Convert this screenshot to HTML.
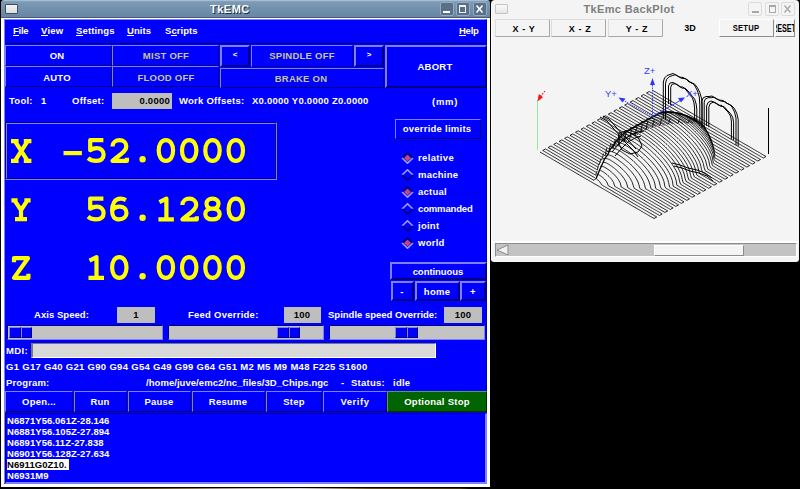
<!DOCTYPE html><html><head><meta charset="utf-8"><style>
html,body{margin:0;padding:0;width:800px;height:489px;overflow:hidden;background:#000;position:relative;}
.a{position:absolute;box-sizing:content-box;}
.t{white-space:pre;}
</style></head><body>
<div class="a" style="left:1px;top:17px;width:489px;height:470px;background:#ffffff;"></div>
<div class="a" style="left:1px;top:0;width:489px;height:17px;background:linear-gradient(#a6bcd2 0px,#a6bcd2 1px,#7d9bb6 1.6px,#6787a6 16px);border-radius:3px 3px 0 0;"></div>
<div class="a" style="left:1px;top:17px;width:489px;height:1px;background:#4c5c6c;"></div>
<div class="a" style="left:5px;top:4px;width:11px;height:8px;border:1px solid #3e4e5c;border-radius:1px;background:linear-gradient(#f4f4f4,#dcdcdc);"></div>
<div class="a t" style="left:211px;top:5px;font:bold 11px/11px 'Liberation Sans',sans-serif;color:#1c2a38;letter-spacing:0.5px;">TkEMC</div>
<div class="a t" style="left:210px;top:4px;font:bold 11px/11px 'Liberation Sans',sans-serif;color:#ffffff;letter-spacing:0.5px;">TkEMC</div>
<div class="a" style="left:440px;top:2px;width:12px;height:12px;border:1px solid #93abc0;border-radius:2px;background:#587189;"></div>
<div class="a" style="left:456px;top:2px;width:12px;height:12px;border:1px solid #93abc0;border-radius:2px;background:#587189;"></div>
<div class="a" style="left:473px;top:2px;width:12px;height:12px;border:1px solid #93abc0;border-radius:2px;background:#587189;"></div>
<div class="a" style="left:443px;top:11px;width:7px;height:2px;background:#ffffff;"></div>
<div class="a" style="left:459px;top:5px;width:5px;height:5px;border:1px solid #f0f0f0;border-top-width:2px;"></div>
<svg class="a" style="left:474px;top:4px" width="12" height="10"><path d="M2.5 1.5 L8.5 8.5 M8.5 1.5 L2.5 8.5" stroke="#fff" stroke-width="1.6"/></svg>
<div class="a" style="left:4px;top:19px;width:481px;height:463px;background:#0000ff;border:1px solid;border-color:#8080ff #0000b0 #0000b0 #8080ff;"></div>
<div class="a" style="left:5px;top:43px;width:481px;height:1px;background:#000080;"></div>
<div class="a t" style="left:13px;top:26px;font:bold 9.5px/9.5px 'Liberation Sans',sans-serif;color:#fff;letter-spacing:-0.25px;">File</div>
<div class="a" style="left:13px;top:35px;width:6px;height:1px;background:#ffffff;"></div>
<div class="a t" style="left:41px;top:26px;font:bold 9.5px/9.5px 'Liberation Sans',sans-serif;color:#fff;letter-spacing:0.25px;">View</div>
<div class="a" style="left:41px;top:35px;width:7px;height:1px;background:#ffffff;"></div>
<div class="a t" style="left:76px;top:26px;font:bold 9.5px/9.5px 'Liberation Sans',sans-serif;color:#fff;letter-spacing:0.15px;">Settings</div>
<div class="a" style="left:76px;top:35px;width:7px;height:1px;background:#ffffff;"></div>
<div class="a t" style="left:127px;top:26px;font:bold 9.5px/9.5px 'Liberation Sans',sans-serif;color:#fff;letter-spacing:0.04999999999999999px;">Units</div>
<div class="a" style="left:127px;top:35px;width:7px;height:1px;background:#ffffff;"></div>
<div class="a t" style="left:165px;top:26px;font:bold 9.5px/9.5px 'Liberation Sans',sans-serif;color:#fff;letter-spacing:0.04999999999999999px;">Scripts</div>
<div class="a" style="left:171px;top:35px;width:6px;height:1px;background:#ffffff;"></div>
<div class="a t" style="left:459px;top:26px;font:bold 9.5px/9.5px 'Liberation Sans',sans-serif;color:#fff;letter-spacing:-0.25px;">Help</div>
<div class="a" style="left:459px;top:35px;width:7px;height:1px;background:#ffffff;"></div>
<div class="a" style="left:5px;top:45px;width:105px;height:19px;border:1px solid;border-color:#8080ff #000080 #000080 #8080ff;"></div>
<div class="a t" style="left:-93px;width:300px;text-align:center;top:51px;font:bold 9.5px/9.5px 'Liberation Sans',sans-serif;color:#fff;letter-spacing:0.25px;">ON</div>
<div class="a" style="left:112px;top:45px;width:105px;height:19px;border:1px solid;border-color:#8080ff #000080 #000080 #8080ff;"></div>
<div class="a t" style="left:16px;width:300px;text-align:center;top:51px;font:bold 9.5px/9.5px 'Liberation Sans',sans-serif;color:#c8c890;letter-spacing:0.25px;">MIST OFF</div>
<div class="a" style="left:220px;top:45px;width:26px;height:18px;border:2px solid;border-color:#8080ff #000080 #000080 #8080ff;"></div>
<div class="a t" style="left:85px;width:300px;text-align:center;top:51px;font:bold 8px/8px 'Liberation Sans',sans-serif;color:#fff;letter-spacing:0px;">&lt;</div>
<div class="a" style="left:251px;top:45px;width:100px;height:20px;border:1px solid;border-color:#8080ff #000080 #000080 #8080ff;"></div>
<div class="a t" style="left:152px;width:300px;text-align:center;top:51px;font:bold 9.5px/9.5px 'Liberation Sans',sans-serif;color:#c8c890;letter-spacing:0.25px;">SPINDLE OFF</div>
<div class="a" style="left:354px;top:45px;width:26px;height:18px;border:2px solid;border-color:#8080ff #000080 #000080 #8080ff;"></div>
<div class="a t" style="left:219px;width:300px;text-align:center;top:51px;font:bold 8px/8px 'Liberation Sans',sans-serif;color:#fff;letter-spacing:0px;">&gt;</div>
<div class="a" style="left:385px;top:45px;width:98px;height:39px;border:2px solid;border-color:#8080ff #000080 #000080 #8080ff;"></div>
<div class="a t" style="left:285px;width:300px;text-align:center;top:62px;font:bold 9.5px/9.5px 'Liberation Sans',sans-serif;color:#fff;letter-spacing:0.25px;">ABORT</div>
<div class="a" style="left:5px;top:66px;width:105px;height:19px;border:1px solid;border-color:#8080ff #000080 #000080 #8080ff;"></div>
<div class="a t" style="left:-93px;width:300px;text-align:center;top:73px;font:bold 9.5px/9.5px 'Liberation Sans',sans-serif;color:#fff;letter-spacing:0.25px;">AUTO</div>
<div class="a" style="left:112px;top:66px;width:105px;height:19px;border:1px solid;border-color:#8080ff #000080 #000080 #8080ff;"></div>
<div class="a t" style="left:16px;width:300px;text-align:center;top:73px;font:bold 9.5px/9.5px 'Liberation Sans',sans-serif;color:#c8c890;letter-spacing:0.25px;">FLOOD OFF</div>
<div class="a" style="left:220px;top:68px;width:162px;height:18px;border:1px solid;border-color:#8080ff #000080 #000080 #8080ff;"></div>
<div class="a t" style="left:151px;width:300px;text-align:center;top:74px;font:bold 9.5px/9.5px 'Liberation Sans',sans-serif;color:#c8c890;letter-spacing:0.25px;">BRAKE ON</div>
<div class="a t" style="left:9px;top:96px;font:bold 9.5px/9.5px 'Liberation Sans',sans-serif;color:#fff;letter-spacing:0.25px;">Tool:</div>
<div class="a t" style="left:41px;top:96px;font:bold 9.5px/9.5px 'Liberation Sans',sans-serif;color:#fff;letter-spacing:0.25px;">1</div>
<div class="a t" style="left:72px;top:96px;font:bold 9.5px/9.5px 'Liberation Sans',sans-serif;color:#fff;letter-spacing:0.25px;">Offset:</div>
<div class="a" style="left:112px;top:93px;width:60px;height:16px;background:#bebebe;"></div>
<div class="a t" style="left:-130px;width:300px;text-align:right;top:96px;font:bold 9.5px/9.5px 'Liberation Sans',sans-serif;color:#000;letter-spacing:0.25px;">0.0000</div>
<div class="a t" style="left:179px;top:96px;font:bold 9.5px/9.5px 'Liberation Sans',sans-serif;color:#fff;letter-spacing:0.25px;">Work Offsets:</div>
<div class="a t" style="left:252px;top:96px;font:bold 9.5px/9.5px 'Liberation Sans',sans-serif;color:#fff;letter-spacing:0.25px;">X0.0000 Y0.0000 Z0.0000</div>
<div class="a t" style="left:432px;top:97px;font:bold 9.5px/9.5px 'Liberation Sans',sans-serif;color:#fff;letter-spacing:0.75px;">(mm)</div>
<div class="a" style="left:395px;top:119px;width:84px;height:18px;border:1px solid;border-color:#8080ff #000080 #000080 #8080ff;"></div>
<div class="a t" style="left:287px;width:300px;text-align:center;top:124px;font:bold 9.5px/9.5px 'Liberation Sans',sans-serif;color:#fff;letter-spacing:0.25px;">override limits</div>
<div class="a" style="left:5px;top:122px;width:270px;height:56px;border:1px solid;border-color:#000080 #8080ff #8080ff #000080;"></div>
<div class="a" style="left:6px;top:123px;width:268px;height:54px;border:1px solid;border-color:#8080ff #000080 #000080 #8080ff;"></div>
<svg class="a" style="left:0;top:0" width="290" height="300"><g fill="none" stroke="#ffff00" stroke-width="4.2" stroke-linejoin="round"><path transform="translate(21.20,162.80)" d="M-6.2,-21.7 L6.4,-1.9 M6.4,-21.7 L-6.2,-1.9 M-10.2,-21.7 L-2.6,-21.7 M2.6,-21.7 L10.2,-21.7 M-10.2,-1.9 L-2.6,-1.9 M2.6,-1.9 L10.2,-1.9"/><path transform="translate(72.70,162.80)" d="M-9.2,-9.7 L9.2,-9.7"/><path transform="translate(96.00,162.80)" d="M7.4,-22.6 L-5.8,-22.6 L-5.8,-12.6 C-3.6,-14 -1.5,-14.6 0.8,-14.6 C5,-14.6 7.6,-11.8 7.6,-8.2 C7.6,-4 4.6,-1.9 0,-1.9 C-3,-1.9 -5.6,-2.6 -8,-4.6"/><path transform="translate(119.30,162.80)" d="M-6.8,-16.2 C-6.8,-20.5 -3.5,-22.6 0.2,-22.6 C4.4,-22.6 7,-20 7,-16.4 C7,-11.5 1,-8.5 -6.8,-1.9 L7.6,-1.9 L7.6,-5"/><circle fill="#ffff00" stroke="none" cx="142.60" cy="159.20" r="3.2"/><path transform="translate(165.90,162.80)" d="M0,-22.6 C4.6,-22.6 7.2,-18 7.2,-12.2 C7.2,-6.4 4.6,-1.9 0,-1.9 C-4.6,-1.9 -7.2,-6.4 -7.2,-12.2 C-7.2,-18 -4.6,-22.6 0,-22.6 Z"/><path transform="translate(189.20,162.80)" d="M0,-22.6 C4.6,-22.6 7.2,-18 7.2,-12.2 C7.2,-6.4 4.6,-1.9 0,-1.9 C-4.6,-1.9 -7.2,-6.4 -7.2,-12.2 C-7.2,-18 -4.6,-22.6 0,-22.6 Z"/><path transform="translate(212.50,162.80)" d="M0,-22.6 C4.6,-22.6 7.2,-18 7.2,-12.2 C7.2,-6.4 4.6,-1.9 0,-1.9 C-4.6,-1.9 -7.2,-6.4 -7.2,-12.2 C-7.2,-18 -4.6,-22.6 0,-22.6 Z"/><path transform="translate(235.80,162.80)" d="M0,-22.6 C4.6,-22.6 7.2,-18 7.2,-12.2 C7.2,-6.4 4.6,-1.9 0,-1.9 C-4.6,-1.9 -7.2,-6.4 -7.2,-12.2 C-7.2,-18 -4.6,-22.6 0,-22.6 Z"/><path transform="translate(21.00,221.00)" d="M-6.4,-20.6 L0,-10.8 L6.4,-20.6 M0,-10.8 L0,-1.9 M-9.6,-20.6 L-3.4,-20.6 M3.4,-20.6 L9.6,-20.6 M-6,-1.9 L6,-1.9"/><path transform="translate(96.00,221.30)" d="M7.4,-22.6 L-5.8,-22.6 L-5.8,-12.6 C-3.6,-14 -1.5,-14.6 0.8,-14.6 C5,-14.6 7.6,-11.8 7.6,-8.2 C7.6,-4 4.6,-1.9 0,-1.9 C-3,-1.9 -5.6,-2.6 -8,-4.6"/><path transform="translate(119.30,221.30)" d="M6.6,-21.2 C4.8,-22.2 3,-22.6 1.2,-22.6 C-4.8,-22.6 -7.2,-17.2 -7.2,-10.5 C-7.2,-4.6 -4.6,-1.9 -0.2,-1.9 C4.4,-1.9 7.2,-4.8 7.2,-8.4 C7.2,-12.2 4.4,-14.6 0.2,-14.6 C-3.6,-14.6 -6,-12.8 -7,-10.8"/><circle fill="#ffff00" stroke="none" cx="142.60" cy="217.70" r="3.2"/><path transform="translate(165.90,221.30)" d="M-6.5,-19.2 L0.5,-22.6 L0.5,-1.9 M-7.5,-1.9 L8,-1.9"/><path transform="translate(189.20,221.30)" d="M-6.8,-16.2 C-6.8,-20.5 -3.5,-22.6 0.2,-22.6 C4.4,-22.6 7,-20 7,-16.4 C7,-11.5 1,-8.5 -6.8,-1.9 L7.6,-1.9 L7.6,-5"/><path transform="translate(212.50,221.30)" d="M0,-22.6 C3.8,-22.6 6,-20.4 6,-17.6 C6,-14.8 3.8,-12.6 0,-12.6 C-3.8,-12.6 -6,-14.8 -6,-17.6 C-6,-20.4 -3.8,-22.6 0,-22.6 Z M0,-12.6 C4.6,-12.6 7.2,-10.4 7.2,-7.2 C7.2,-4 4.6,-1.9 0,-1.9 C-4.6,-1.9 -7.2,-4 -7.2,-7.2 C-7.2,-10.4 -4.6,-12.6 0,-12.6 Z"/><path transform="translate(235.80,221.30)" d="M0,-22.6 C4.6,-22.6 7.2,-18 7.2,-12.2 C7.2,-6.4 4.6,-1.9 0,-1.9 C-4.6,-1.9 -7.2,-6.4 -7.2,-12.2 C-7.2,-18 -4.6,-22.6 0,-22.6 Z"/><path transform="translate(21.00,279.80)" d="M-7,-17.6 L-7,-21.6 L7,-21.6 L-7,-1.9 L7.4,-1.9 L7.4,-6"/><path transform="translate(96.00,279.80)" d="M-6.5,-19.2 L0.5,-22.6 L0.5,-1.9 M-7.5,-1.9 L8,-1.9"/><path transform="translate(119.30,279.80)" d="M0,-22.6 C4.6,-22.6 7.2,-18 7.2,-12.2 C7.2,-6.4 4.6,-1.9 0,-1.9 C-4.6,-1.9 -7.2,-6.4 -7.2,-12.2 C-7.2,-18 -4.6,-22.6 0,-22.6 Z"/><circle fill="#ffff00" stroke="none" cx="142.60" cy="276.20" r="3.2"/><path transform="translate(165.90,279.80)" d="M0,-22.6 C4.6,-22.6 7.2,-18 7.2,-12.2 C7.2,-6.4 4.6,-1.9 0,-1.9 C-4.6,-1.9 -7.2,-6.4 -7.2,-12.2 C-7.2,-18 -4.6,-22.6 0,-22.6 Z"/><path transform="translate(189.20,279.80)" d="M0,-22.6 C4.6,-22.6 7.2,-18 7.2,-12.2 C7.2,-6.4 4.6,-1.9 0,-1.9 C-4.6,-1.9 -7.2,-6.4 -7.2,-12.2 C-7.2,-18 -4.6,-22.6 0,-22.6 Z"/><path transform="translate(212.50,279.80)" d="M0,-22.6 C4.6,-22.6 7.2,-18 7.2,-12.2 C7.2,-6.4 4.6,-1.9 0,-1.9 C-4.6,-1.9 -7.2,-6.4 -7.2,-12.2 C-7.2,-18 -4.6,-22.6 0,-22.6 Z"/><path transform="translate(235.80,279.80)" d="M0,-22.6 C4.6,-22.6 7.2,-18 7.2,-12.2 C7.2,-6.4 4.6,-1.9 0,-1.9 C-4.6,-1.9 -7.2,-6.4 -7.2,-12.2 C-7.2,-18 -4.6,-22.6 0,-22.6 Z"/></g></svg>
<svg class="a" style="left:401px;top:152px" width="13" height="12"><path d="M1 6 L6.5 0.8 L12 6" fill="none" stroke="#00007a" stroke-width="1.6"/><path d="M1 6 L6.5 11.2 L12 6" fill="none" stroke="#9a9aff" stroke-width="1.6"/><path d="M3 6 L6.5 2.8 L10 6 L6.5 9.2Z" fill="#c84870"/></svg>
<div class="a t" style="left:418px;top:153px;font:bold 9.5px/9.5px 'Liberation Sans',sans-serif;color:#fff;letter-spacing:0.35px;">relative</div>
<svg class="a" style="left:401px;top:169px" width="13" height="12"><path d="M1 6 L6.5 0.8 L12 6" fill="none" stroke="#9a9aff" stroke-width="1.6"/><path d="M1 6 L6.5 11.2 L12 6" fill="none" stroke="#00007a" stroke-width="1.6"/></svg>
<div class="a t" style="left:418px;top:170px;font:bold 9.5px/9.5px 'Liberation Sans',sans-serif;color:#fff;letter-spacing:0.25px;">machine</div>
<svg class="a" style="left:401px;top:186px" width="13" height="12"><path d="M1 6 L6.5 0.8 L12 6" fill="none" stroke="#00007a" stroke-width="1.6"/><path d="M1 6 L6.5 11.2 L12 6" fill="none" stroke="#9a9aff" stroke-width="1.6"/><path d="M3 6 L6.5 2.8 L10 6 L6.5 9.2Z" fill="#c84870"/></svg>
<div class="a t" style="left:418px;top:187px;font:bold 9.5px/9.5px 'Liberation Sans',sans-serif;color:#fff;letter-spacing:0.25px;">actual</div>
<svg class="a" style="left:401px;top:203px" width="13" height="12"><path d="M1 6 L6.5 0.8 L12 6" fill="none" stroke="#9a9aff" stroke-width="1.6"/><path d="M1 6 L6.5 11.2 L12 6" fill="none" stroke="#00007a" stroke-width="1.6"/></svg>
<div class="a t" style="left:418px;top:204px;font:bold 9.5px/9.5px 'Liberation Sans',sans-serif;color:#fff;letter-spacing:-0.15000000000000002px;">commanded</div>
<svg class="a" style="left:401px;top:220px" width="13" height="12"><path d="M1 6 L6.5 0.8 L12 6" fill="none" stroke="#9a9aff" stroke-width="1.6"/><path d="M1 6 L6.5 11.2 L12 6" fill="none" stroke="#00007a" stroke-width="1.6"/></svg>
<div class="a t" style="left:418px;top:221px;font:bold 9.5px/9.5px 'Liberation Sans',sans-serif;color:#fff;letter-spacing:0.25px;">joint</div>
<svg class="a" style="left:401px;top:237px" width="13" height="12"><path d="M1 6 L6.5 0.8 L12 6" fill="none" stroke="#00007a" stroke-width="1.6"/><path d="M1 6 L6.5 11.2 L12 6" fill="none" stroke="#9a9aff" stroke-width="1.6"/><path d="M3 6 L6.5 2.8 L10 6 L6.5 9.2Z" fill="#c84870"/></svg>
<div class="a t" style="left:418px;top:238px;font:bold 9.5px/9.5px 'Liberation Sans',sans-serif;color:#fff;letter-spacing:0.25px;">world</div>
<div class="a" style="left:390px;top:262px;width:93px;height:14px;border:2px solid;border-color:#8080ff #000080 #000080 #8080ff;"></div>
<div class="a t" style="left:288px;width:300px;text-align:center;top:267px;font:bold 9.5px/9.5px 'Liberation Sans',sans-serif;color:#fff;letter-spacing:-0.04999999999999999px;">continuous</div>
<div class="a" style="left:391px;top:281px;width:19px;height:16px;border:2px solid;border-color:#8080ff #000080 #000080 #8080ff;"></div>
<div class="a t" style="left:252px;width:300px;text-align:center;top:287px;font:bold 9.5px/9.5px 'Liberation Sans',sans-serif;color:#fff;letter-spacing:0.25px;">-</div>
<div class="a" style="left:415px;top:281px;width:41px;height:16px;border:2px solid;border-color:#8080ff #000080 #000080 #8080ff;"></div>
<div class="a t" style="left:287px;width:300px;text-align:center;top:287px;font:bold 9.5px/9.5px 'Liberation Sans',sans-serif;color:#fff;letter-spacing:0.25px;">home</div>
<div class="a" style="left:460px;top:281px;width:22px;height:16px;border:2px solid;border-color:#8080ff #000080 #000080 #8080ff;"></div>
<div class="a t" style="left:323px;width:300px;text-align:center;top:287px;font:bold 9.5px/9.5px 'Liberation Sans',sans-serif;color:#fff;letter-spacing:0.25px;">+</div>
<div class="a t" style="left:34px;top:310px;font:bold 9.5px/9.5px 'Liberation Sans',sans-serif;color:#fff;letter-spacing:0.04999999999999999px;">Axis Speed:</div>
<div class="a" style="left:117px;top:307px;width:38px;height:16px;background:#bebebe;"></div>
<div class="a t" style="left:-14px;width:300px;text-align:center;top:310px;font:bold 9.5px/9.5px 'Liberation Sans',sans-serif;color:#000;letter-spacing:0.25px;">1</div>
<div class="a t" style="left:188px;top:310px;font:bold 9.5px/9.5px 'Liberation Sans',sans-serif;color:#fff;letter-spacing:0.25px;">Feed Override:</div>
<div class="a" style="left:284px;top:307px;width:37px;height:16px;background:#bebebe;"></div>
<div class="a t" style="left:152px;width:300px;text-align:center;top:310px;font:bold 9.5px/9.5px 'Liberation Sans',sans-serif;color:#000;letter-spacing:0.25px;">100</div>
<div class="a t" style="left:328px;top:310px;font:bold 9.5px/9.5px 'Liberation Sans',sans-serif;color:#fff;letter-spacing:0.0px;">Spindle speed Override:</div>
<div class="a" style="left:444px;top:307px;width:38px;height:16px;background:#bebebe;"></div>
<div class="a t" style="left:313px;width:300px;text-align:center;top:310px;font:bold 9.5px/9.5px 'Liberation Sans',sans-serif;color:#000;letter-spacing:0.25px;">100</div>
<div class="a" style="left:7px;top:325px;width:154px;height:13px;border:1px solid;border-color:#000080 #8080ff #8080ff #000080;background:#c3c3c3;"></div>
<div class="a" style="left:9px;top:327px;width:10px;height:9px;border:1px solid;border-color:#8080ff #000080 #000080 #8080ff;background:#0000ff;"></div>
<div class="a" style="left:21px;top:327px;width:9px;height:9px;border:1px solid;border-color:#8080ff #000080 #000080 #8080ff;background:#0000ff;"></div>
<div class="a" style="left:168px;top:325px;width:154px;height:13px;border:1px solid;border-color:#000080 #8080ff #8080ff #000080;background:#c3c3c3;"></div>
<div class="a" style="left:277px;top:327px;width:10px;height:9px;border:1px solid;border-color:#8080ff #000080 #000080 #8080ff;background:#0000ff;"></div>
<div class="a" style="left:289px;top:327px;width:9px;height:9px;border:1px solid;border-color:#8080ff #000080 #000080 #8080ff;background:#0000ff;"></div>
<div class="a" style="left:329px;top:325px;width:154px;height:13px;border:1px solid;border-color:#000080 #8080ff #8080ff #000080;background:#c3c3c3;"></div>
<div class="a" style="left:395px;top:327px;width:10px;height:9px;border:1px solid;border-color:#8080ff #000080 #000080 #8080ff;background:#0000ff;"></div>
<div class="a" style="left:407px;top:327px;width:9px;height:9px;border:1px solid;border-color:#8080ff #000080 #000080 #8080ff;background:#0000ff;"></div>
<div class="a t" style="left:6px;top:346px;font:bold 9.5px/9.5px 'Liberation Sans',sans-serif;color:#fff;letter-spacing:0.4px;">MDI:</div>
<div class="a" style="left:31px;top:343px;width:402px;height:13px;border:1px solid;border-color:#7a7a6a #ffffff #ffffff #7a7a6a;border-width:1px 1px 1px 2px;background:#d9d9d9;"></div>
<div class="a t" style="left:6px;top:362px;font:bold 9.5px/9.5px 'Liberation Sans',sans-serif;color:#fff;letter-spacing:0.3px;">G1 G17 G40 G21 G90 G94 G54 G49 G99 G64 G51 M2 M5 M9 M48 F225 S1600</div>
<div class="a t" style="left:6px;top:378px;font:bold 9.5px/9.5px 'Liberation Sans',sans-serif;color:#fff;letter-spacing:0.15px;">Program:</div>
<div class="a t" style="left:146px;top:378px;font:bold 9.5px/9.5px 'Liberation Sans',sans-serif;color:#fff;letter-spacing:0.04999999999999999px;">/home/juve/emc2/nc_files/3D_Chips.ngc</div>
<div class="a t" style="left:341px;top:378px;font:bold 9.5px/9.5px 'Liberation Sans',sans-serif;color:#fff;letter-spacing:0.25px;">-</div>
<div class="a t" style="left:351px;top:378px;font:bold 9.5px/9.5px 'Liberation Sans',sans-serif;color:#fff;letter-spacing:0.25px;">Status:</div>
<div class="a t" style="left:393px;top:378px;font:bold 9.5px/9.5px 'Liberation Sans',sans-serif;color:#fff;letter-spacing:0.25px;">idle</div>
<div class="a" style="left:5px;top:391px;width:66px;height:19px;border:1px solid;border-color:#8080ff #000080 #000080 #8080ff;"></div>
<div class="a t" style="left:-111px;width:300px;text-align:center;top:397px;font:bold 9.5px/9.5px 'Liberation Sans',sans-serif;color:#fff;letter-spacing:0.25px;">Open...</div>
<div class="a" style="left:74px;top:391px;width:51px;height:19px;border:1px solid;border-color:#8080ff #000080 #000080 #8080ff;"></div>
<div class="a t" style="left:-50px;width:300px;text-align:center;top:397px;font:bold 9.5px/9.5px 'Liberation Sans',sans-serif;color:#fff;letter-spacing:0.25px;">Run</div>
<div class="a" style="left:128px;top:391px;width:61px;height:19px;border:1px solid;border-color:#8080ff #000080 #000080 #8080ff;"></div>
<div class="a t" style="left:9px;width:300px;text-align:center;top:397px;font:bold 9.5px/9.5px 'Liberation Sans',sans-serif;color:#fff;letter-spacing:0.25px;">Pause</div>
<div class="a" style="left:192px;top:391px;width:71px;height:19px;border:1px solid;border-color:#8080ff #000080 #000080 #8080ff;"></div>
<div class="a t" style="left:78px;width:300px;text-align:center;top:397px;font:bold 9.5px/9.5px 'Liberation Sans',sans-serif;color:#fff;letter-spacing:0.25px;">Resume</div>
<div class="a" style="left:266px;top:391px;width:54px;height:19px;border:1px solid;border-color:#8080ff #000080 #000080 #8080ff;"></div>
<div class="a t" style="left:144px;width:300px;text-align:center;top:397px;font:bold 9.5px/9.5px 'Liberation Sans',sans-serif;color:#fff;letter-spacing:0.25px;">Step</div>
<div class="a" style="left:323px;top:391px;width:62px;height:19px;border:1px solid;border-color:#8080ff #000080 #000080 #8080ff;"></div>
<div class="a t" style="left:205px;width:300px;text-align:center;top:397px;font:bold 9.5px/9.5px 'Liberation Sans',sans-serif;color:#fff;letter-spacing:0.55px;">Verify</div>
<div class="a" style="left:387px;top:391px;width:98px;height:19px;border:1px solid;border-color:#5a9a5a #003000 #003000 #5a9a5a;background:#006400;"></div>
<div class="a t" style="left:287px;width:300px;text-align:center;top:397px;font:bold 9.5px/9.5px 'Liberation Sans',sans-serif;color:#fff;letter-spacing:0.25px;">Optional Stop</div>
<div class="a" style="left:5px;top:413px;width:479px;height:68px;border:1px solid;border-color:#000080 #8080ff #8080ff #000080;border-width:1px 2px 2px 1px;"></div>
<div class="a t" style="left:7px;top:416px;font:bold 9.5px/9.5px 'Liberation Sans',sans-serif;color:#fff;letter-spacing:0.04999999999999999px;">N6871Y56.061Z-28.146</div>
<div class="a t" style="left:7px;top:427px;font:bold 9.5px/9.5px 'Liberation Sans',sans-serif;color:#fff;letter-spacing:0.04999999999999999px;">N6881Y56.105Z-27.894</div>
<div class="a t" style="left:7px;top:438px;font:bold 9.5px/9.5px 'Liberation Sans',sans-serif;color:#fff;letter-spacing:0.04999999999999999px;">N6891Y56.11Z-27.838</div>
<div class="a t" style="left:7px;top:449px;font:bold 9.5px/9.5px 'Liberation Sans',sans-serif;color:#fff;letter-spacing:0.04999999999999999px;">N6901Y56.128Z-27.634</div>
<div class="a" style="left:7px;top:459px;width:62px;height:11px;background:#ffffff;"></div>
<div class="a t" style="left:7px;top:460px;font:bold 9.5px/9.5px 'Liberation Sans',sans-serif;color:#000;letter-spacing:0.04999999999999999px;">N6911G0Z10.</div>
<div class="a t" style="left:7px;top:471px;font:bold 9.5px/9.5px 'Liberation Sans',sans-serif;color:#fff;letter-spacing:0.04999999999999999px;">N6931M9</div>
<div class="a" style="left:40px;top:488px;width:430px;height:1px;background:linear-gradient(90deg,#000 0,#3a2414 40px,#6a4a30 120px,#b0a8a0 200px,#d0d0d0 260px,#6a4628 330px,#40281a 420px,#000 430px);"></div>
<div class="a" style="left:491px;top:0;width:308px;height:262px;background:#f4f4f4;border-radius:4px 4px 3px 3px;"></div>
<div class="a" style="left:491px;top:12px;width:1px;height:248px;background:#ffffff;"></div>
<div class="a" style="left:495px;top:4px;width:11px;height:8px;border:1px solid #c4c4c4;border-radius:1px;background:linear-gradient(#fafafa,#e6e6e6);"></div>
<div class="a t" style="left:479px;width:300px;text-align:center;top:4px;font:bold 11px/11px 'Liberation Sans',sans-serif;color:#7f7f7f;letter-spacing:0.35px;">TkEmc BackPlot</div>
<div class="a" style="left:748px;top:2px;width:12px;height:12px;border:1px solid #dcdcdc;border-radius:2px;"></div>
<div class="a" style="left:765px;top:2px;width:12px;height:12px;border:1px solid #dcdcdc;border-radius:2px;"></div>
<div class="a" style="left:781px;top:2px;width:12px;height:12px;border:1px solid #dcdcdc;border-radius:2px;"></div>
<div class="a" style="left:752px;top:11px;width:7px;height:2px;background:#a8a8a8;"></div>
<div class="a" style="left:769px;top:5px;width:5px;height:5px;border:1px solid #a8a8a8;border-top-width:2px;"></div>
<svg class="a" style="left:782px;top:4px" width="12" height="10"><path d="M2.5 1.5 L8.5 8.5 M8.5 1.5 L2.5 8.5" stroke="#a8a8a8" stroke-width="1.4"/></svg>
<div class="a" style="left:495px;top:19px;width:53px;height:16px;border:1px solid;border-color:#dcdcdc #a8a8a8 #a8a8a8 #dcdcdc;background:#f4f4f4;"></div>
<div class="a t" style="left:374px;width:300px;text-align:center;top:25px;font:bold 9px/9px 'Liberation Sans',sans-serif;color:#000;letter-spacing:0.6px;">X - Y</div>
<div class="a" style="left:551px;top:19px;width:53px;height:16px;border:1px solid;border-color:#dcdcdc #a8a8a8 #a8a8a8 #dcdcdc;background:#f4f4f4;"></div>
<div class="a t" style="left:430px;width:300px;text-align:center;top:25px;font:bold 9px/9px 'Liberation Sans',sans-serif;color:#000;letter-spacing:0.6px;">X - Z</div>
<div class="a" style="left:608px;top:19px;width:53px;height:16px;border:1px solid;border-color:#dcdcdc #a8a8a8 #a8a8a8 #dcdcdc;background:#f4f4f4;"></div>
<div class="a t" style="left:487px;width:300px;text-align:center;top:25px;font:bold 9px/9px 'Liberation Sans',sans-serif;color:#000;letter-spacing:0.6px;">Y - Z</div>
<div class="a t" style="left:540px;width:300px;text-align:center;top:24px;font:bold 9px/9px 'Liberation Sans',sans-serif;color:#000;letter-spacing:0px;">3D</div>
<div class="a" style="left:719px;top:19px;width:53px;height:16px;border:1px solid;border-color:#ffffff #8c8c8c #8c8c8c #ffffff;background:#f4f4f4;"></div>
<div class="a t" style="left:596px;width:300px;text-align:center;top:23px;font:bold 9.5px/9.5px 'Liberation Sans',sans-serif;color:#000;letter-spacing:0.25px;transform:scaleX(0.8);">SETUP</div>
<div class="a" style="left:775px;top:19px;width:18px;height:16px;border:1px solid;border-color:#ffffff #8c8c8c #8c8c8c #ffffff;background:#f4f4f4;overflow:hidden;"><div class="t" style="position:absolute;left:-4px;top:4px;transform:scaleX(0.72);transform-origin:0 0;font:bold 10px/10px 'Liberation Sans',sans-serif;color:#000">RESET</div></div>
<div class="a" style="left:492px;top:241px;width:306px;height:2px;background:#ffffff;"></div>
<div class="a" style="left:495px;top:243px;width:300px;height:12px;border:1px solid;border-color:#8c8c8c #ffffff #ffffff #8c8c8c;background:#c3c3c3;"></div>
<svg class="a" style="left:496px;top:244px" width="14" height="12"><path d="M1 6 L12 1 L12 11Z" fill="#f0f0f0" stroke="#8c8c8c" stroke-width="1"/></svg>
<div class="a" style="left:654px;top:245px;width:88px;height:9px;border:1px solid;border-color:#ffffff #8c8c8c #8c8c8c #ffffff;background:#f4f4f4;"></div>
<svg class="a" style="left:491px;top:38px" width="308" height="203" viewBox="0 0 308 203">
<path d="M49.0,114.0 L50.0,114.6 L50.9,115.1 L51.9,115.7 L52.8,116.2 L53.8,116.8 L54.7,117.3 L55.6,117.9 L56.6,118.4 L57.5,119.0 L58.5,119.5 L59.5,120.1 L60.4,120.7 L61.4,121.2 L62.3,121.8 L63.2,122.3 L64.2,122.9 L65.1,123.4 L66.1,124.0 L67.0,124.5 L68.0,125.1 L69.0,125.6 L69.9,126.2 L70.9,126.7 L71.8,127.3 L72.8,127.9 L73.7,128.4 L74.6,129.0 L75.6,129.5 L76.5,130.1 L77.5,130.6 L78.5,131.2 L79.4,131.7 L80.4,132.3 L81.3,132.8 L82.2,133.4 L83.2,133.9 L84.1,134.5 L85.1,135.1 L86.0,135.6 L87.0,136.2 L88.0,136.7 L88.9,137.3 L89.9,137.8 L90.8,138.4 L91.8,138.9 L92.7,139.5 L93.6,140.0 L94.6,140.6 L95.5,141.2 L96.5,141.7 L97.5,142.3 L98.4,142.8 L99.4,143.4 L100.3,143.9 L101.2,144.5 L102.2,145.0 L103.1,145.6 L104.1,146.1 L105.0,146.7 L106.0,147.2 L107.0,147.8 L107.9,148.4 L108.9,148.9 L109.8,149.5 L110.8,150.0 L111.7,150.6 L112.6,151.1 L113.6,151.7 L114.5,152.2 L115.5,152.8 L116.5,153.3 L117.4,153.9 L118.4,154.5 L119.3,155.0 L120.2,155.6 L121.2,156.1 L122.1,156.7 L123.1,157.2 L124.0,157.8 L125.0,158.3 L126.0,158.9 L126.9,159.4 L127.9,160.0 L128.8,160.6 L129.8,161.1 L130.7,161.7 L131.6,162.2 L132.6,162.8 L133.5,163.3 L134.5,163.9 L135.5,164.4 L136.4,165.0 L137.4,165.5 L138.3,166.1 L139.2,166.6 L140.2,167.2 L141.1,167.8 L142.1,168.3 L143.0,168.9 L144.0,169.4 L145.0,170.0 L145.9,170.5 L146.9,171.1 L147.8,171.6 L148.8,172.2 L149.7,172.7 L150.6,173.3 L151.6,173.8 L152.5,174.4 L153.5,175.0 L154.5,175.5 L155.4,176.1 L156.4,176.6 L157.3,177.2 L158.2,177.7 L159.2,178.3 L160.1,178.8 L161.1,179.4 L162.0,179.9 L163.0,180.5 L165.7,179.0 L164.8,178.4 L163.8,177.9 L162.9,177.3 L161.9,176.8 L161.0,176.2 L160.0,175.7 L159.1,175.1 L158.1,174.6 L157.2,174.0 L156.2,173.4 L155.3,172.9 L154.3,172.3 L153.4,171.8 L152.4,171.2 L151.5,170.7 L150.5,170.1 L149.6,169.6 L148.6,169.0 L147.7,168.5 L146.7,167.9 L145.8,167.4 L144.8,166.8 L143.9,166.2 L142.9,165.7 L142.0,165.1 L141.0,164.6 L140.1,164.0 L139.1,163.5 L138.2,162.9 L137.2,162.4 L136.3,161.8 L135.3,161.3 L134.4,160.7 L133.4,160.1 L132.5,159.6 L131.5,159.0 L130.6,158.5 L129.6,157.9 L128.7,157.4 L127.7,156.8 L126.8,156.3 L125.8,155.7 L124.9,155.2 L123.9,154.6 L123.0,154.1 L122.0,153.5 L121.1,152.9 L120.1,152.4 L119.2,151.8 L118.2,151.3 L117.3,150.7 L116.3,150.2 L115.4,149.6 L114.4,149.1 L113.5,148.5 L112.5,148.0 L111.6,147.4 L110.6,146.8 L109.7,145.2 L108.7,143.8 L107.8,142.8 L106.8,142.0 L105.9,141.4M104.9,141.0 L104.0,141.2 L103.0,142.4 L102.1,141.9 L101.1,141.3 L100.2,140.8 L99.2,140.2 L98.3,139.6 L97.3,139.1 L96.4,138.5 L95.4,138.0 L94.5,137.4 L93.5,136.9 L92.6,136.3 L91.6,135.8 L90.7,135.2 L89.7,134.7 L88.8,134.1 L87.8,133.5 L86.9,133.0 L85.9,132.4 L85.0,131.9 L84.0,131.3 L83.1,130.8 L82.1,130.2 L81.2,129.7 L80.2,129.1 L79.3,128.6 L78.3,128.0 L77.4,127.5 L76.4,126.9 L75.5,126.3 L74.5,125.8 L73.6,125.2 L72.6,124.7 L71.7,124.1 L70.7,123.6 L69.8,123.0 L68.8,122.5 L67.9,121.9 L66.9,121.4 L66.0,120.8 L65.0,120.2 L64.1,119.7 L63.1,119.1 L62.2,118.6 L61.2,118.0 L60.3,117.5 L59.3,116.9 L58.4,116.4 L57.4,115.8 L56.5,115.3 L55.5,114.7 L54.6,114.2 L53.6,113.6 L52.7,113.0 L51.7,112.5 L54.5,111.0 L55.4,111.5 L56.4,112.1 L57.3,112.6 L58.3,113.2 L59.2,113.7 L60.2,114.3 L61.1,114.9 L62.1,115.4 L63.0,116.0 L64.0,116.5 L64.9,117.1 L65.9,117.6 L66.8,118.2 L67.8,118.7 L68.7,119.3 L69.7,119.8 L70.6,120.4 L71.6,121.0 L72.5,121.5 L73.5,122.1 L74.4,122.6 L75.4,123.2 L76.3,123.7 L77.3,124.3 L78.2,124.8 L79.2,125.4 L80.1,125.9 L81.1,126.5 L82.0,127.0 L83.0,127.6 L83.9,128.2 L84.9,128.7 L85.8,129.3 L86.8,129.8 L87.7,130.4 L88.7,130.9 L89.6,131.5 L90.6,132.0 L91.5,132.6 L92.5,133.1 L93.4,133.7 L94.4,134.3 L95.3,134.8 L96.3,135.4 L97.2,135.9 L98.2,136.5 L99.1,137.0 L100.1,137.6 L101.0,138.1 L102.0,138.7 L102.9,139.2 L103.9,139.8M105.8,136.7 L106.7,136.6 L107.7,136.8 L108.6,137.3 L109.6,137.9 L110.5,138.6 L111.5,139.3 L112.4,140.1 L113.4,141.0 L114.3,142.1 L115.3,143.3 L116.2,144.9 L117.2,147.6 L118.1,148.1 L119.1,148.7 L120.0,149.2 L121.0,149.8 L121.9,150.3 L122.9,150.9 L123.8,151.4 L124.8,152.0 L125.7,152.5 L126.7,153.1 L127.6,153.6 L128.6,154.2 L129.5,154.8 L130.5,155.3 L131.4,155.9 L132.4,156.4 L133.3,157.0 L134.3,157.5 L135.2,158.1 L136.2,158.6 L137.1,159.2 L138.1,159.7 L139.0,160.3 L140.0,160.9 L140.9,161.4 L141.9,162.0 L142.8,162.5 L143.8,163.1 L144.7,163.6 L145.7,164.2 L146.6,164.7 L147.6,165.3 L148.5,165.8 L149.5,166.4 L150.4,166.9 L151.4,167.5 L152.3,168.1 L153.3,168.6 L154.2,169.2 L155.2,169.7 L156.1,170.3 L157.1,170.8 L158.0,171.4 L159.0,171.9 L159.9,172.5 L160.9,173.0 L161.8,173.6 L162.8,174.2 L163.7,174.7 L164.7,175.3 L165.6,175.8 L166.6,176.4 L167.5,176.9 L168.5,177.5 L171.2,176.0 L170.2,175.4 L169.3,174.9 L168.3,174.3 L167.4,173.7 L166.4,173.2 L165.5,172.6 L164.5,172.1 L163.6,171.5 L162.6,171.0 L161.7,170.4 L160.7,169.9 L159.8,169.3 L158.8,168.8 L157.9,168.2 L156.9,167.7 L156.0,167.1 L155.0,166.5 L154.1,166.0 L153.1,165.4 L152.2,164.9 L151.2,164.3 L150.3,163.8 L149.3,163.2 L148.4,162.7 L147.4,162.1 L146.5,161.6 L145.5,161.0 L144.6,160.4 L143.6,159.9 L142.7,159.3 L141.7,158.8 L140.8,158.2 L139.8,157.7 L138.9,157.1 L137.9,156.6 L137.0,156.0 L136.0,155.5 L135.1,154.9 L134.1,154.4 L133.2,153.8 L132.2,153.2 L131.3,152.7 L130.3,152.1 L129.4,151.6 L128.4,151.0 L127.5,150.5 L126.5,149.9 L125.6,149.4 L124.6,148.8 L123.7,148.3 L122.7,144.8 L121.8,143.1 L120.8,141.7 L119.9,140.5 L118.9,139.4 L118.0,138.5 L117.0,137.6 L116.1,136.7 L115.1,136.0 L114.2,135.2 L113.2,134.6 L112.3,133.9 L111.3,133.3 L110.4,132.8 L109.4,132.5M106.6,132.8 L105.6,133.8 L104.7,137.2 L103.7,136.6 L102.8,136.1 L101.8,135.5 L100.9,135.0 L99.9,134.4 L99.0,133.8 L98.0,133.3 L97.1,132.7 L96.1,132.2 L95.2,131.6 L94.2,131.1 L93.3,130.5 L92.3,130.0 L91.4,129.4 L90.4,128.9 L89.5,128.3 L88.5,127.8 L87.6,127.2 L86.6,126.6 L85.7,126.1 L84.7,125.5 L83.8,125.0 L82.8,124.4 L81.9,123.9 L80.9,123.3 L80.0,122.8 L79.0,122.2 L78.1,121.7 L77.1,121.1 L76.2,120.5 L75.2,120.0 L74.3,119.4 L73.3,118.9 L72.4,118.3 L71.4,117.8 L70.5,117.2 L69.5,116.7 L68.6,116.1 L67.6,115.6 L66.7,115.0 L65.7,114.5 L64.8,113.9 L63.8,113.3 L62.9,112.8 L61.9,112.2 L61.0,111.7 L60.0,111.1 L59.1,110.6 L58.1,110.0 L57.2,109.5 L59.9,108.0 L60.9,108.5 L61.8,109.1 L62.8,109.6 L63.7,110.2 L64.7,110.7 L65.6,111.3 L66.6,111.8 L67.5,112.4 L68.5,112.9 L69.4,113.5 L70.4,114.0 L71.3,114.6 L72.3,115.2 L73.2,115.7 L74.2,116.3 L75.1,116.8 L76.1,117.4 L77.0,117.9 L78.0,118.5 L78.9,119.0 L79.9,119.6 L80.8,120.1 L81.8,120.7 L82.7,121.3 L83.7,121.8 L84.6,122.4 L85.6,122.9 L86.5,123.5 L87.5,124.0 L88.4,124.6 L89.4,125.1 L90.3,125.7 L91.3,126.2 L92.2,126.8 L93.2,127.3 L94.1,127.9 L95.1,128.5 L96.0,129.0 L97.0,129.6 L97.9,130.1 L98.9,130.7 L99.8,131.2 L100.8,131.8 L101.7,132.3 L102.7,132.9 L103.6,133.4 L104.6,134.0 L105.5,134.6M109.3,128.3 L110.3,128.2 L111.2,128.3 L112.2,128.6 L113.1,129.0 L114.1,129.5 L115.0,130.1 L116.0,130.7 L116.9,131.3 L117.9,132.0 L118.8,132.7 L119.8,133.5 L120.7,134.3 L121.7,135.1 L122.6,136.0 L123.6,137.0 L124.5,138.0 L125.5,139.1 L126.4,140.3 L127.4,141.6 L128.3,143.2 L129.3,145.1 L130.2,149.0 L131.2,149.5 L132.1,150.1 L133.1,150.6 L134.0,151.2 L135.0,151.7 L135.9,152.3 L136.9,152.8 L137.8,153.4 L138.8,153.9 L139.7,154.5 L140.7,155.1 L141.6,155.6 L142.6,156.2 L143.5,156.7 L144.5,157.3 L145.4,157.8 L146.4,158.4 L147.3,158.9 L148.3,159.5 L149.2,160.0 L150.2,160.6 L151.1,161.2 L152.1,161.7 L153.0,162.3 L154.0,162.8 L154.9,163.4 L155.9,163.9 L156.8,164.5 L157.8,165.0 L158.7,165.6 L159.7,166.1 L160.6,166.7 L161.6,167.2 L162.5,167.8 L163.5,168.4 L164.4,168.9 L165.4,169.5 L166.3,170.0 L167.3,170.6 L168.2,171.1 L169.2,171.7 L170.1,172.2 L171.1,172.8 L172.0,173.3 L173.0,173.9 L173.9,174.5 L176.7,172.9 L175.7,172.4 L174.8,171.8 L173.8,171.3 L172.9,170.7 L171.9,170.2 L171.0,169.6 L170.0,169.1 L169.1,168.5 L168.1,168.0 L167.2,167.4 L166.2,166.8 L165.3,166.3 L164.3,165.7 L163.4,165.2 L162.4,164.6 L161.5,164.1 L160.5,163.5 L159.6,163.0 L158.6,162.4 L157.7,161.9 L156.7,161.3 L155.8,160.7 L154.8,160.2 L153.9,159.6 L152.9,159.1 L152.0,158.5 L151.0,158.0 L150.1,157.4 L149.1,156.9 L148.2,156.3 L147.2,155.8 L146.3,155.2 L145.3,154.7 L144.4,154.1 L143.4,153.5 L142.5,153.0 L141.5,152.4 L140.6,151.9 L139.6,151.3 L138.7,150.8 L137.7,150.2 L136.8,149.7 L135.8,145.9 L134.9,143.6 L133.9,141.9 L133.0,140.4 L132.0,139.1 L131.1,137.9 L130.1,136.7 L129.2,135.7 L128.2,134.7 L127.3,133.7 L126.3,132.9 L125.4,132.0 L124.4,131.2 L123.5,130.4 L122.5,129.6 L121.6,128.9 L120.6,128.2 L119.7,127.6 L118.7,126.9 L117.8,126.3 L116.8,125.8 L115.9,125.2 L114.9,124.8 L114.0,124.5 L113.0,124.3 L112.1,124.3M108.3,126.1 L107.3,127.7 L106.4,131.9 L105.4,131.4 L104.5,130.8 L103.5,130.3 L102.6,129.7 L101.6,129.2 L100.7,128.6 L99.7,128.1 L98.8,127.5 L97.8,126.9 L96.9,126.4 L95.9,125.8 L95.0,125.3 L94.0,124.7 L93.1,124.2 L92.1,123.6 L91.2,123.1 L90.2,122.5 L89.3,122.0 L88.3,121.4 L87.4,120.8 L86.4,120.3 L85.5,119.7 L84.5,119.2 L83.6,118.6 L82.6,118.1 L81.7,117.5 L80.7,117.0 L79.8,116.4 L78.8,115.9 L77.9,115.3 L76.9,114.8 L76.0,114.2 L75.0,113.6 L74.1,113.1 L73.1,112.5 L72.2,112.0 L71.2,111.4 L70.3,110.9 L69.3,110.3 L68.4,109.8 L67.4,109.2 L66.5,108.7 L65.5,108.1 L64.6,107.5 L63.6,107.0 L62.7,106.4 L65.4,104.9 L66.3,105.5 L67.3,106.0 L68.2,106.6 L69.2,107.1 L70.1,107.7 L71.1,108.3 L72.0,108.8 L73.0,109.4 L73.9,109.9 L74.9,110.5 L75.8,111.0 L76.8,111.6 L77.7,112.1 L78.7,112.7 L79.6,113.2 L80.6,113.8 L81.5,114.3 L82.5,114.9 L83.4,115.5 L84.4,116.0 L85.3,116.6 L86.3,117.1 L87.2,117.7 L88.2,118.2 L89.1,118.8 L90.1,119.3 L91.0,119.9 L92.0,120.4 L92.9,121.0 L93.9,121.6 L94.8,122.1 L95.8,122.7 L96.7,123.2 L97.7,123.8 L98.6,124.3 L99.6,124.9 L100.5,125.4 L101.5,126.0 L102.4,126.5 L103.4,127.1 L104.3,127.6 L105.3,128.2 L106.2,128.8 L107.2,129.3M111.9,120.9 L112.9,120.6 L113.8,120.5 L114.8,120.5 L115.7,120.6 L116.7,120.9 L117.6,121.2 L118.6,121.7 L119.5,122.2 L120.5,122.8 L121.4,123.4 L122.4,124.0 L123.3,124.6 L124.3,125.3 L125.2,126.0 L126.2,126.7 L127.1,127.4 L128.1,128.2 L129.0,129.0 L130.0,129.9 L130.9,130.7 L131.9,131.6 L132.8,132.6 L133.8,133.6 L134.7,134.6 L135.7,135.7 L136.6,136.9 L137.6,138.1 L138.5,139.5 L139.5,140.9 L140.4,142.6 L141.4,144.7 L142.3,147.8 L143.3,150.4 L144.2,150.9 L145.2,151.5 L146.1,152.0 L147.1,152.6 L148.0,153.1 L149.0,153.7 L149.9,154.2 L150.9,154.8 L151.8,155.4 L152.8,155.9 L153.7,156.5 L154.7,157.0 L155.6,157.6 L156.6,158.1 L157.5,158.7 L158.5,159.2 L159.4,159.8 L160.4,160.3 L161.3,160.9 L162.3,161.5 L163.2,162.0 L164.2,162.6 L165.1,163.1 L166.1,163.7 L167.0,164.2 L168.0,164.8 L168.9,165.3 L169.9,165.9 L170.8,166.4 L171.8,167.0 L172.7,167.5 L173.7,168.1 L174.6,168.7 L175.6,169.2 L176.5,169.8 L177.5,170.3 L178.4,170.9 L179.4,171.4 L182.1,169.9 L181.2,169.4 L180.2,168.8 L179.3,168.3 L178.3,167.7 L177.4,167.1 L176.4,166.6 L175.5,166.0 L174.5,165.5 L173.6,164.9 L172.6,164.4 L171.7,163.8 L170.7,163.3 L169.8,162.7 L168.8,162.2 L167.9,161.6 L166.9,161.0 L166.0,160.5 L165.0,159.9 L164.1,159.4 L163.1,158.8 L162.2,158.3 L161.2,157.7 L160.3,157.2 L159.3,156.6 L158.4,156.1 L157.4,155.5 L156.5,155.0 L155.5,154.4 L154.6,153.8 L153.6,153.3 L152.7,152.7 L151.7,152.2 L150.8,151.6 L149.8,151.1 L148.9,150.5 L147.9,146.7 L147.0,144.0 L146.0,142.0 L145.1,140.3 L144.1,138.7 L143.2,137.4 L142.2,136.1 L141.3,134.9 L140.3,133.7 L139.4,132.7 L138.4,131.6 L137.5,130.6 L136.5,129.7 L135.6,128.8 L134.6,127.9 L133.7,127.0 L132.7,126.2 L131.8,125.4 L130.8,124.6 L129.9,123.9 L128.9,123.2 L128.0,122.5 L127.0,121.8 L126.1,121.1 L125.1,120.5 L124.2,119.9 L123.2,119.3 L122.3,118.7 L121.3,118.2 L120.4,117.8 L119.4,117.4 L118.5,117.1 L117.5,116.9 L116.6,116.8 L115.6,116.8M109.9,120.9 L109.0,124.0 L108.0,126.7 L107.1,126.1 L106.1,125.6 L105.2,125.0 L104.2,124.5 L103.3,123.9 L102.3,123.4 L101.4,122.8 L100.4,122.3 L99.5,121.7 L98.5,121.1 L97.6,120.6 L96.6,120.0 L95.7,119.5 L94.7,118.9 L93.8,118.4 L92.8,117.8 L91.9,117.3 L90.9,116.7 L90.0,116.2 L89.0,115.6 L88.1,115.1 L87.1,114.5 L86.2,113.9 L85.2,113.4 L84.3,112.8 L83.3,112.3 L82.4,111.7 L81.4,111.2 L80.5,110.6 L79.5,110.1 L78.6,109.5 L77.6,109.0 L76.7,108.4 L75.7,107.8 L74.8,107.3 L73.8,106.7 L72.9,106.2 L71.9,105.6 L71.0,105.1 L70.0,104.5 L69.1,104.0 L68.1,103.4 L70.9,101.9 L71.8,102.5 L72.8,103.0 L73.7,103.6 L74.7,104.1 L75.6,104.7 L76.6,105.2 L77.5,105.8 L78.5,106.3 L79.4,106.9 L80.4,107.4 L81.3,108.0 L82.3,108.6 L83.2,109.1 L84.2,109.7 L85.1,110.2 L86.1,110.8 L87.0,111.3 L88.0,111.9 L88.9,112.4 L89.9,113.0 L90.8,113.5 L91.8,114.1 L92.7,114.6 L93.7,115.2 L94.6,115.8 L95.6,116.3 L96.5,116.9 L97.5,117.4 L98.4,118.0 L99.4,118.5 L100.3,119.1 L101.3,119.6 L102.2,120.2 L103.2,120.7 L104.1,121.3 L105.1,121.9 L106.0,122.4 L107.0,123.0 L107.9,123.5 L108.9,124.1 L109.8,124.6M115.5,113.8 L116.5,113.5 L117.4,113.4 L118.4,113.3 L119.3,113.4 L120.3,113.5 L121.2,113.8 L122.2,114.1 L123.1,114.4 L124.1,114.9 L125.0,115.4 L126.0,116.0 L126.9,116.6 L127.9,117.2 L128.8,117.8 L129.8,118.5 L130.7,119.1 L131.7,119.8 L132.6,120.5 L133.6,121.2 L134.5,122.0 L135.5,122.8 L136.4,123.6 L137.4,124.4 L138.3,125.2 L139.3,126.1 L140.2,127.0 L141.2,127.9 L142.1,128.9 L143.1,129.9 L144.0,130.9 L145.0,132.0 L145.9,133.1 L146.9,134.3 L147.8,135.5 L148.8,136.9 L149.7,138.3 L150.7,139.9 L151.6,141.7 L152.6,143.7 L153.5,146.5 L154.5,150.7 L155.4,151.2 L156.4,151.8 L157.3,152.3 L158.3,152.9 L159.2,153.4 L160.2,154.0 L161.1,154.5 L162.1,155.1 L163.0,155.7 L164.0,156.2 L164.9,156.8 L165.9,157.3 L166.8,157.9 L167.8,158.4 L168.7,159.0 L169.7,159.5 L170.6,160.1 L171.6,160.6 L172.5,161.2 L173.5,161.8 L174.4,162.3 L175.4,162.9 L176.3,163.4 L177.3,164.0 L178.2,164.5 L179.2,165.1 L180.1,165.6 L181.1,166.2 L182.0,166.7 L183.0,167.3 L183.9,167.8 L184.9,168.4 L187.6,166.9 L186.6,166.3 L185.7,165.8 L184.7,165.2 L183.8,164.7 L182.8,164.1 L181.9,163.6 L180.9,163.0 L180.0,162.5 L179.0,161.9 L178.1,161.3 L177.1,160.8 L176.2,160.2 L175.2,159.7 L174.3,159.1 L173.3,158.6 L172.4,158.0 L171.4,157.5 L170.5,156.9 L169.5,156.4 L168.6,155.8 L167.6,155.3 L166.7,154.7 L165.7,154.1 L164.8,153.6 L163.8,153.0 L162.9,152.5 L161.9,151.9 L161.0,151.4 L160.0,150.8 L159.1,147.2 L158.1,144.0 L157.2,141.8 L156.2,139.9 L155.3,138.2 L154.3,136.7 L153.4,135.3 L152.4,134.0 L151.5,132.7 L150.5,131.5 L149.6,130.4 L148.6,129.3 L147.7,128.3 L146.7,127.3 L145.8,126.3 L144.8,125.4 L143.9,124.5 L142.9,123.6 L142.0,122.7 L141.0,121.9 L140.1,121.1 L139.1,120.3 L138.2,119.5 L137.2,118.8 L136.3,118.0 L135.3,117.3 L134.4,116.6 L133.4,116.0 L132.5,115.3 L131.5,114.7 L130.6,114.0 L129.6,113.4 L128.7,112.9 L127.7,112.3 L126.8,111.8 L125.8,111.3 L124.9,110.9 L123.9,110.6 L123.0,110.3 L122.0,110.1 L121.1,110.0 L120.1,110.0M112.5,115.6 L111.6,119.2 L110.6,122.0 L109.7,121.4 L108.7,120.9 L107.8,120.3 L106.8,119.8 L105.9,119.2 L104.9,118.7 L104.0,118.1 L103.0,117.6 L102.1,117.0 L101.1,116.5 L100.2,115.9 L99.2,115.4 L98.3,114.8 L97.3,114.2 L96.4,113.7 L95.4,113.1 L94.5,112.6 L93.5,112.0 L92.6,111.5 L91.6,110.9 L90.7,110.4 L89.7,109.8 L88.8,109.3 L87.8,108.7 L86.9,108.1 L85.9,107.6 L85.0,107.0 L84.0,106.5 L83.1,105.9 L82.1,105.4 L81.2,104.8 L80.2,104.3 L79.3,103.7 L78.3,103.2 L77.4,102.6 L76.4,102.1 L75.5,101.5 L74.5,100.9 L73.6,100.4 L76.3,98.9 L77.3,99.4 L78.2,100.0 L79.2,100.5 L80.1,101.1 L81.1,101.6 L82.0,102.2 L83.0,102.8 L83.9,103.3 L84.9,103.9 L85.8,104.4 L86.8,105.0 L87.7,105.5 L88.7,106.1 L89.6,106.6 L90.6,107.2 L91.5,107.7 L92.5,108.3 L93.4,108.9 L94.4,109.4 L95.3,110.0 L96.3,110.5 L97.2,111.1 L98.2,111.6 L99.1,112.2 L100.1,112.7 L101.0,113.3 L102.0,113.8 L102.9,114.4 L103.9,114.9 L104.8,115.5 L105.8,116.1 L106.7,116.6 L107.7,117.2 L108.6,117.7 L109.6,118.3 L110.5,118.8 L111.5,119.4 L112.4,119.9M120.0,107.2 L121.0,107.0 L121.9,106.9 L122.9,106.8 L123.8,106.9 L124.8,107.0 L125.7,107.3 L126.7,107.5 L127.6,107.9 L128.6,108.3 L129.5,108.8 L130.5,109.3 L131.4,109.9 L132.4,110.5 L133.3,111.1 L134.3,111.7 L135.2,112.3 L136.2,112.9 L137.1,113.6 L138.1,114.3 L139.0,115.0 L140.0,115.7 L140.9,116.4 L141.9,117.2 L142.8,118.0 L143.8,118.7 L144.7,119.6 L145.7,120.4 L146.6,121.2 L147.6,122.1 L148.5,123.0 L149.5,124.0 L150.4,124.9 L151.4,125.9 L152.3,126.9 L153.3,128.0 L154.2,129.1 L155.2,130.2 L156.1,131.4 L157.1,132.7 L158.0,134.0 L159.0,135.4 L159.9,136.9 L160.9,138.5 L161.8,140.3 L162.8,142.4 L163.7,145.1 L164.7,150.4 L165.6,151.0 L166.6,151.5 L167.5,152.1 L168.5,152.6 L169.4,153.2 L170.4,153.7 L171.3,154.3 L172.3,154.8 L173.2,155.4 L174.2,156.0 L175.1,156.5 L176.1,157.1 L177.0,157.6 L178.0,158.2 L178.9,158.7 L179.9,159.3 L180.8,159.8 L181.8,160.4 L182.7,160.9 L183.7,161.5 L184.6,162.1 L185.6,162.6 L186.5,163.2 L187.5,163.7 L188.4,164.3 L189.4,164.8 L190.3,165.4 L193.0,163.9 L192.1,163.3 L191.1,162.8 L190.2,162.2 L189.2,161.6 L188.3,161.1 L187.3,160.5 L186.4,160.0 L185.4,159.4 L184.5,158.9 L183.5,158.3 L182.6,157.8 L181.6,157.2 L180.7,156.7 L179.7,156.1 L178.8,155.6 L177.8,155.0 L176.9,154.4 L175.9,153.9 L175.0,153.3 L174.0,152.8 L173.1,152.2 L172.1,151.7 L171.2,151.1 L170.2,150.6 L169.3,148.2 L168.3,143.9 L167.4,141.4 L166.4,139.3 L165.5,137.5 L164.5,135.9 L163.6,134.4 L162.6,133.0 L161.7,131.6 L160.7,130.4 L159.8,129.2 L158.8,128.0 L157.9,126.9 L156.9,125.8 L156.0,124.8 L155.0,123.8 L154.1,122.8 L153.1,121.8 L152.2,120.9 L151.2,120.0 L150.3,119.1 L149.3,118.3 L148.4,117.4 L147.4,116.6 L146.5,115.8 L145.5,115.1 L144.6,114.3 L143.6,113.6 L142.7,112.8 L141.7,112.1 L140.8,111.4 L139.8,110.8 L138.9,110.1 L137.9,109.5 L137.0,108.8 L136.0,108.2 L135.1,107.6 L134.1,107.1 L133.2,106.5 L132.2,106.0 L131.3,105.5 L130.3,105.1 L129.4,104.7 L128.4,104.4 L127.5,104.2 L126.5,104.0 L125.6,103.9 L124.6,103.9 L123.7,104.0M116.1,109.8 L115.1,112.6 L114.2,117.9 L113.2,117.3 L112.3,116.8 L111.3,116.2 L110.4,115.7 L109.4,115.1 L108.5,114.5 L107.5,114.0 L106.6,113.4 L105.6,112.9 L104.7,112.3 L103.7,111.8 L102.8,111.2 L101.8,110.7 L100.9,110.1 L99.9,109.6 L99.0,109.0 L98.0,108.4 L97.1,107.9 L96.1,107.3 L95.2,106.8 L94.2,106.2 L93.3,105.7 L92.3,105.1 L91.4,104.6 L90.4,104.0 L89.5,103.5 L88.5,102.9 L87.6,102.4 L86.6,101.8 L85.7,101.2 L84.7,100.7 L83.8,100.1 L82.8,99.6 L81.9,99.0 L80.9,98.5 L80.0,97.9 L79.0,97.4 L81.8,95.9 L82.7,96.4 L83.7,97.0 L84.6,97.5 L85.6,98.1 L86.5,98.6 L87.5,99.2 L88.4,99.7 L89.4,100.3 L90.3,100.8 L91.3,101.4 L92.2,101.9 L93.2,102.5 L94.1,103.1 L95.1,103.6 L96.0,104.2 L97.0,104.7 L97.9,105.3 L98.9,105.8 L99.8,106.4 L100.8,106.9 L101.7,107.5 L102.7,108.0 L103.6,108.6 L104.6,109.2 L105.5,109.7 L106.5,110.3 L107.4,110.8 L108.4,111.4 L109.3,111.9 L110.3,112.5 L111.2,113.0 L112.2,113.6 L113.1,114.1 L114.1,114.7 L115.0,115.2 L116.0,115.8M124.5,101.5 L125.5,101.3 L126.4,101.2 L127.4,101.1 L128.3,101.2 L129.3,101.3 L130.2,101.5 L131.2,101.7 L132.1,102.0 L133.1,102.4 L134.0,102.8 L135.0,103.3 L135.9,103.9 L136.9,104.4 L137.8,105.0 L138.8,105.6 L139.7,106.2 L140.7,106.8 L141.6,107.5 L142.6,108.1 L143.5,108.8 L144.5,109.5 L145.4,110.2 L146.4,110.9 L147.3,111.6 L148.3,112.3 L149.2,113.1 L150.2,113.9 L151.1,114.7 L152.1,115.5 L153.0,116.3 L154.0,117.2 L154.9,118.1 L155.9,119.0 L156.8,119.9 L157.8,120.8 L158.7,121.8 L159.7,122.8 L160.6,123.9 L161.6,124.9 L162.5,126.0 L163.5,127.2 L164.4,128.4 L165.4,129.6 L166.3,130.9 L167.3,132.3 L168.2,133.7 L169.2,135.3 L170.1,136.9 L171.1,138.8 L172.0,140.9 L173.0,143.6 L173.9,148.6 L174.9,150.2 L175.8,150.7 L176.8,151.3 L177.7,151.8 L178.7,152.4 L179.6,152.9 L180.6,153.5 L181.5,154.0 L182.5,154.6 L183.4,155.1 L184.4,155.7 L185.3,156.3 L186.3,156.8 L187.2,157.4 L188.2,157.9 L189.1,158.5 L190.1,159.0 L191.0,159.6 L192.0,160.1 L192.9,160.7 L193.9,161.2 L194.8,161.8 L195.8,162.4 L198.5,160.8 L197.6,160.3 L196.6,159.7 L195.7,159.2 L194.7,158.6 L193.8,158.1 L192.8,157.5 L191.9,157.0 L190.9,156.4 L190.0,155.9 L189.0,155.3 L188.1,154.7 L187.1,154.2 L186.2,153.6 L185.2,153.1 L184.3,152.5 L183.3,152.0 L182.4,151.4 L181.4,150.9 L180.5,150.3 L179.5,149.8 L178.6,149.2 L177.6,144.3 L176.7,141.2 L175.7,138.8 L174.8,136.8 L173.8,135.1 L172.9,133.4 L171.9,131.9 L171.0,130.5 L170.0,129.2 L169.1,127.9 L168.1,126.7 L167.2,125.5 L166.2,124.3 L165.3,123.2 L164.3,122.2 L163.4,121.1 L162.4,120.1 L161.5,119.2 L160.5,118.2 L159.6,117.3 L158.6,116.4 L157.7,115.5 L156.7,114.6 L155.8,113.8 L154.8,113.0 L153.9,112.2 L152.9,111.4 L152.0,110.6 L151.0,109.9 L150.1,109.1 L149.1,108.4 L148.2,107.7 L147.2,107.0 L146.3,106.3 L145.3,105.7 L144.4,105.0 L143.4,104.4 L142.5,103.8 L141.5,103.2 L140.6,102.6 L139.6,102.0 L138.7,101.4 L137.7,100.9 L136.8,100.4 L135.8,100.0 L134.9,99.6 L133.9,99.3 L133.0,99.0 L132.0,98.8 L131.1,98.7 L130.1,98.6 L129.2,98.6 L128.2,98.7M119.7,105.9 L118.7,109.4 L117.8,113.7 L116.8,113.2 L115.9,112.6 L114.9,112.1 L114.0,111.5 L113.0,111.0 L112.1,110.4 L111.1,109.9 L110.2,109.3 L109.2,108.7 L108.3,108.2 L107.3,107.6 L106.4,107.1 L105.4,106.5 L104.5,106.0 L103.5,105.4 L102.6,104.9 L101.6,104.3 L100.7,103.8 L99.7,103.2 L98.8,102.7 L97.8,102.1 L96.9,101.5 L95.9,101.0 L95.0,100.4 L94.0,99.9 L93.1,99.3 L92.1,98.8 L91.2,98.2 L90.2,97.7 L89.3,97.1 L88.3,96.6 L87.4,96.0 L86.4,95.4 L85.5,94.9 L84.5,94.3 L87.2,92.8 L88.2,93.4 L89.1,93.9 L90.1,94.5 L91.0,95.0 L92.0,95.6 L92.9,96.2 L93.9,96.7 L94.8,97.3 L95.8,97.8 L96.7,98.4 L97.7,98.9 L98.6,99.5 L99.6,100.0 L100.5,100.6 L101.5,101.1 L102.4,101.7 L103.4,102.3 L104.3,102.8 L105.3,103.4 L106.2,103.9 L107.2,104.5 L108.1,105.0 L109.1,105.6 L110.0,106.1 L111.0,106.7 L111.9,107.2 L112.9,107.8 L113.8,108.3 L114.8,108.9 L115.7,109.5 L116.7,110.0 L117.6,110.6 L118.6,111.1 L119.5,111.7M129.0,96.7 L130.0,96.5 L130.9,96.3 L131.9,96.3 L132.8,96.3 L133.8,96.4 L134.7,96.5 L135.7,96.7 L136.6,97.0 L137.6,97.3 L138.5,97.7 L139.5,98.2 L140.4,98.6 L141.4,99.2 L142.3,99.7 L143.3,100.3 L144.2,100.9 L145.2,101.5 L146.1,102.1 L147.1,102.8 L148.0,103.4 L149.0,104.1 L149.9,104.7 L150.9,105.4 L151.8,106.1 L152.8,106.9 L153.7,107.6 L154.7,108.3 L155.6,109.1 L156.6,109.9 L157.5,110.7 L158.5,111.5 L159.4,112.3 L160.4,113.2 L161.3,114.0 L162.3,114.9 L163.2,115.8 L164.2,116.8 L165.1,117.7 L166.1,118.7 L167.0,119.7 L168.0,120.8 L168.9,121.8 L169.9,122.9 L170.8,124.1 L171.8,125.3 L172.7,126.5 L173.7,127.8 L174.6,129.1 L175.6,130.5 L176.5,132.0 L177.5,133.7 L178.4,135.4 L179.4,137.4 L180.3,139.6 L181.3,142.5 L182.2,148.2 L183.2,148.8 L184.1,149.4 L185.1,149.9 L186.0,150.5 L187.0,151.0 L187.9,151.6 L188.9,152.1 L189.8,152.7 L190.8,153.2 L191.7,153.8 L192.7,154.3 L193.6,154.9 L194.6,155.5 L195.5,156.0 L196.5,156.6 L197.4,157.1 L198.4,157.7 L199.3,158.2 L200.3,158.8 L201.2,159.3 L204.0,157.8 L203.0,157.3 L202.1,156.7 L201.1,156.2 L200.2,155.6 L199.2,155.0 L198.3,154.5 L197.3,153.9 L196.4,153.4 L195.4,152.8 L194.5,152.3 L193.5,151.7 L192.6,151.2 L191.6,150.6 L190.7,150.1 L189.7,149.5 L188.8,149.0 L187.8,148.4 L186.9,147.8 L185.9,147.3 L185.0,142.0 L184.0,138.9 L183.1,136.6 L182.1,134.5 L181.2,132.8 L180.2,131.1 L179.3,129.6 L178.3,128.1 L177.4,126.8 L176.4,125.5 L175.5,124.2 L174.5,123.0 L173.6,121.9 L172.6,120.7 L171.7,119.7 L170.7,118.6 L169.8,117.6 L168.8,116.6 L167.9,115.6 L166.9,114.7 L166.0,113.7 L165.0,112.8 L164.1,112.0 L163.1,111.1 L162.2,110.3 L161.2,109.4 L160.3,108.6 L159.3,107.8 L158.4,107.1 L157.4,106.3 L156.5,105.6 L155.5,104.8 L154.6,104.1 L153.6,103.4 L152.7,102.7 L151.7,102.1 L150.8,101.4 L149.8,100.8 L148.9,100.1 L147.9,99.5 L147.0,98.9 L146.0,98.3 L145.1,97.7 L144.1,97.2 L143.2,96.6 L142.2,96.1 L141.3,95.7 L140.3,95.3 L139.4,95.0 L138.4,94.7 L137.5,94.5 L136.5,94.3 L135.6,94.2 L134.6,94.2 L133.7,94.2 L132.7,94.4M124.2,101.9 L123.2,105.4 L122.3,110.2 L121.3,109.6 L120.4,109.1 L119.4,108.5 L118.5,107.9 L117.5,107.4 L116.6,106.8 L115.6,106.3 L114.7,105.7 L113.7,105.2 L112.8,104.6 L111.8,104.1 L110.9,103.5 L109.9,103.0 L109.0,102.4 L108.0,101.8 L107.1,101.3 L106.1,100.7 L105.2,100.2 L104.2,99.6 L103.3,99.1 L102.3,98.5 L101.4,98.0 L100.4,97.4 L99.5,96.9 L98.5,96.3 L97.6,95.8 L96.6,95.2 L95.7,94.6 L94.7,94.1 L93.8,93.5 L92.8,93.0 L91.9,92.4 L90.9,91.9 L90.0,91.3 L92.7,89.8 L93.7,90.4 L94.6,90.9 L95.6,91.5 L96.5,92.0 L97.5,92.6 L98.4,93.1 L99.4,93.7 L100.3,94.2 L101.3,94.8 L102.2,95.3 L103.2,95.9 L104.1,96.5 L105.1,97.0 L106.0,97.6 L107.0,98.1 L107.9,98.7 L108.9,99.2 L109.8,99.8 L110.8,100.3 L111.7,100.9 L112.7,101.4 L113.6,102.0 L114.6,102.6 L115.5,103.1 L116.5,103.7 L117.4,104.2 L118.4,104.8 L119.3,105.3 L120.3,105.9 L121.2,106.4 L122.2,107.0 L123.1,107.5 L124.1,108.1 L125.0,108.6M133.6,93.0 L134.5,92.7 L135.5,92.6 L136.4,92.4 L137.4,92.4 L138.3,92.5 L139.3,92.6 L140.2,92.7 L141.2,92.9 L142.1,93.2 L143.1,93.6 L144.0,93.9 L145.0,94.4 L145.9,94.9 L146.9,95.4 L147.8,96.0 L148.8,96.6 L149.7,97.1 L150.7,97.7 L151.6,98.4 L152.6,99.0 L153.5,99.6 L154.5,100.3 L155.4,101.0 L156.4,101.6 L157.3,102.3 L158.3,103.1 L159.2,103.8 L160.2,104.5 L161.1,105.3 L162.1,106.1 L163.0,106.8 L164.0,107.6 L164.9,108.5 L165.9,109.3 L166.8,110.2 L167.8,111.0 L168.7,111.9 L169.7,112.9 L170.6,113.8 L171.6,114.8 L172.5,115.8 L173.5,116.8 L174.4,117.8 L175.4,118.9 L176.3,120.0 L177.3,121.1 L178.2,122.3 L179.2,123.6 L180.1,124.9 L181.1,126.2 L182.0,127.6 L183.0,129.1 L183.9,130.7 L184.9,132.4 L185.8,134.3 L186.8,136.5 L187.7,139.2 L188.7,143.8 L189.6,146.3 L190.6,146.9 L191.5,147.4 L192.5,148.0 L193.4,148.5 L194.4,149.1 L195.3,149.7 L196.3,150.2 L197.2,150.8 L198.2,151.3 L199.1,151.9 L200.1,152.4 L201.0,153.0 L202.0,153.5 L202.9,154.1 L203.9,154.6 L204.8,155.2 L205.8,155.8 L206.7,156.3 L209.4,154.8 L208.5,154.2 L207.5,153.7 L206.6,153.1 L205.6,152.6 L204.7,152.0 L203.7,151.5 L202.8,150.9 L201.8,150.4 L200.9,149.8 L199.9,149.3 L199.0,148.7 L198.0,148.1 L197.1,147.6 L196.1,147.0 L195.2,146.5 L194.2,145.9 L193.3,145.4 L192.3,144.8 L191.4,141.9 L190.4,137.6 L189.5,135.0 L188.5,132.8 L187.6,130.9 L186.6,129.1 L185.7,127.5 L184.7,126.1 L183.8,124.6 L182.8,123.3 L181.9,122.0 L180.9,120.8 L180.0,119.6 L179.0,118.5 L178.1,117.3 L177.1,116.3 L176.2,115.2 L175.2,114.2 L174.3,113.2 L173.3,112.3 L172.4,111.3 L171.4,110.4 L170.5,109.5 L169.5,108.6 L168.6,107.8 L167.6,106.9 L166.7,106.1 L165.7,105.3 L164.8,104.5 L163.8,103.7 L162.9,103.0 L161.9,102.2 L161.0,101.5 L160.0,100.8 L159.1,100.1 L158.1,99.4 L157.2,98.8 L156.2,98.1 L155.3,97.5 L154.3,96.8 L153.4,96.2 L152.4,95.6 L151.5,95.0 L150.5,94.4 L149.6,93.9 L148.6,93.3 L147.7,92.9 L146.7,92.4 L145.8,92.0 L144.8,91.7 L143.9,91.4 L142.9,91.2 L142.0,91.0 L141.0,90.9 L140.1,90.9 L139.1,90.9 L138.2,91.0M129.6,98.2 L128.7,101.2 L127.7,107.1 L126.8,106.6 L125.8,106.0 L124.9,105.5 L123.9,104.9 L123.0,104.4 L122.0,103.8 L121.1,103.3 L120.1,102.7 L119.2,102.1 L118.2,101.6 L117.3,101.0 L116.3,100.5 L115.4,99.9 L114.4,99.4 L113.5,98.8 L112.5,98.3 L111.6,97.7 L110.6,97.2 L109.7,96.6 L108.7,96.1 L107.8,95.5 L106.8,94.9 L105.9,94.4 L104.9,93.8 L104.0,93.3 L103.0,92.7 L102.1,92.2 L101.1,91.6 L100.2,91.1 L99.2,90.5 L98.3,90.0 L97.3,89.4 L96.4,88.8 L95.4,88.3 L98.2,86.8 L99.1,87.3 L100.1,87.9 L101.0,88.4 L102.0,89.0 L102.9,89.6 L103.9,90.1 L104.8,90.7 L105.8,91.2 L106.7,91.8 L107.7,92.3 L108.6,92.9 L109.6,93.4 L110.5,94.0 L111.5,94.5 L112.4,95.1 L113.4,95.6 L114.3,96.2 L115.3,96.8 L116.2,97.3 L117.2,97.9 L118.1,98.4 L119.1,99.0 L120.0,99.5 L121.0,100.1 L121.9,100.6 L122.9,101.2 L123.8,101.7 L124.8,102.3 L125.7,102.9 L126.7,103.4 L127.6,104.0 L128.6,104.5 L129.5,105.1 L130.5,105.6M139.0,90.0 L140.0,89.7 L140.9,89.5 L141.9,89.4 L142.8,89.4 L143.8,89.4 L144.7,89.5 L145.7,89.7 L146.6,89.9 L147.6,90.2 L148.5,90.5 L149.5,90.9 L150.4,91.3 L151.4,91.8 L152.3,92.4 L153.3,92.9 L154.2,93.5 L155.2,94.1 L156.1,94.7 L157.1,95.3 L158.0,95.9 L159.0,96.6 L159.9,97.2 L160.9,97.9 L161.8,98.6 L162.8,99.3 L163.7,100.0 L164.7,100.7 L165.6,101.5 L166.6,102.2 L167.5,103.0 L168.5,103.8 L169.4,104.6 L170.4,105.4 L171.3,106.3 L172.3,107.1 L173.2,108.0 L174.2,108.9 L175.1,109.8 L176.1,110.7 L177.0,111.7 L178.0,112.7 L178.9,113.7 L179.9,114.8 L180.8,115.8 L181.8,116.9 L182.7,118.1 L183.7,119.3 L184.6,120.5 L185.6,121.8 L186.5,123.1 L187.5,124.5 L188.4,126.0 L189.4,127.6 L190.3,129.4 L191.3,131.3 L192.2,133.4 L193.2,136.1 L194.1,140.4 L195.1,143.3 L196.0,143.9 L197.0,144.4 L197.9,145.0 L198.9,145.5 L199.8,146.1 L200.8,146.6 L201.7,147.2 L202.7,147.7 L203.6,148.3 L204.6,148.8 L205.5,149.4 L206.5,150.0 L207.4,150.5 L208.4,151.1 L209.3,151.6 L210.3,152.2 L211.2,152.7 L212.2,153.3 L214.9,151.8 L214.0,151.2 L213.0,150.7 L212.1,150.1 L211.1,149.6 L210.2,149.0 L209.2,148.4 L208.3,147.9 L207.3,147.3 L206.4,146.8 L205.4,146.2 L204.5,145.7 L203.5,145.1 L202.6,144.6 L201.6,144.0 L200.7,143.5 L199.7,142.9 L198.8,142.3 L197.8,141.8 L196.9,138.9 L195.9,134.6 L195.0,131.9 L194.0,129.8 L193.1,127.8 L192.1,126.1 L191.2,124.5 L190.2,123.0 L189.3,121.6 L188.3,120.3 L187.4,119.0 L186.4,117.8 L185.5,116.6 L184.5,115.4 L183.6,114.3 L182.6,113.2 L181.7,112.2 L180.7,111.2 L179.8,110.2 L178.8,109.2 L177.9,108.3 L176.9,107.4 L176.0,106.5 L175.0,105.6 L174.1,104.7 L173.1,103.9 L172.2,103.1 L171.2,102.3 L170.3,101.5 L169.3,100.7 L168.4,100.0 L167.4,99.2 L166.5,98.5 L165.5,97.8 L164.6,97.1 L163.6,96.4 L162.7,95.7 L161.7,95.1 L160.8,94.4 L159.8,93.8 L158.9,93.2 L157.9,92.6 L157.0,92.0 L156.0,91.4 L155.1,90.9 L154.1,90.3 L153.2,89.8 L152.2,89.4 L151.3,89.0 L150.3,88.7 L149.4,88.4 L148.4,88.2 L147.5,88.0 L146.5,87.9 L145.6,87.9 L144.6,87.9 L143.7,88.0M135.1,95.2 L134.2,98.1 L133.2,104.1 L132.3,103.6 L131.3,103.0 L130.4,102.4 L129.4,101.9 L128.5,101.3 L127.5,100.8 L126.6,100.2 L125.6,99.7 L124.7,99.1 L123.7,98.6 L122.8,98.0 L121.8,97.5 L120.9,96.9 L119.9,96.4 L119.0,95.8 L118.0,95.2 L117.1,94.7 L116.1,94.1 L115.2,93.6 L114.2,93.0 L113.3,92.5 L112.3,91.9 L111.4,91.4 L110.4,90.8 L109.5,90.3 L108.5,89.7 L107.6,89.1 L106.6,88.6 L105.7,88.0 L104.7,87.5 L103.8,86.9 L102.8,86.4 L101.9,85.8 L100.9,85.3 L103.6,83.8 L104.6,84.3 L105.5,84.9 L106.5,85.4 L107.4,86.0 L108.4,86.5 L109.3,87.1 L110.3,87.6 L111.2,88.2 L112.2,88.7 L113.1,89.3 L114.1,89.9 L115.0,90.4 L116.0,91.0 L116.9,91.5 L117.9,92.1 L118.8,92.6 L119.8,93.2 L120.7,93.7 L121.7,94.3 L122.6,94.8 L123.6,95.4 L124.5,95.9 L125.5,96.5 L126.4,97.1 L127.4,97.6 L128.3,98.2 L129.3,98.7 L130.2,99.3 L131.2,99.8 L132.1,100.4 L133.1,100.9 L134.0,101.5 L135.0,102.0 L135.9,102.6M144.5,86.9 L145.4,86.7 L146.4,86.5 L147.3,86.4 L148.3,86.3 L149.2,86.4 L150.2,86.5 L151.1,86.6 L152.1,86.9 L153.0,87.2 L154.0,87.5 L154.9,87.9 L155.9,88.3 L156.8,88.8 L157.8,89.3 L158.7,89.9 L159.7,90.5 L160.6,91.1 L161.6,91.7 L162.5,92.3 L163.5,92.9 L164.4,93.6 L165.4,94.2 L166.3,94.9 L167.3,95.6 L168.2,96.3 L169.2,97.0 L170.1,97.7 L171.1,98.4 L172.0,99.2 L173.0,100.0 L173.9,100.8 L174.9,101.6 L175.8,102.4 L176.8,103.2 L177.7,104.1 L178.7,105.0 L179.6,105.9 L180.6,106.8 L181.5,107.7 L182.5,108.7 L183.4,109.7 L184.4,110.7 L185.3,111.7 L186.3,112.8 L187.2,113.9 L188.2,115.1 L189.1,116.3 L190.1,117.5 L191.0,118.8 L192.0,120.1 L192.9,121.5 L193.9,123.0 L194.8,124.6 L195.8,126.3 L196.7,128.2 L197.7,130.4 L198.6,133.1 L199.6,137.4 L200.5,140.3 L201.5,140.8 L202.4,141.4 L203.4,141.9 L204.3,142.5 L205.3,143.1 L206.2,143.6 L207.2,144.2 L208.1,144.7 L209.1,145.3 L210.0,145.8 L211.0,146.4 L211.9,146.9 L212.9,147.5 L213.8,148.0 L214.8,148.6 L215.7,149.1 L216.7,149.7 L217.6,150.3 L220.4,148.7 L219.4,148.2 L218.5,147.6 L217.5,147.1 L216.6,146.5 L215.6,146.0 L214.7,145.4 L213.7,144.9 L212.8,144.3 L211.8,143.8 L210.9,143.2 L209.9,142.6 L209.0,142.1 L208.0,141.5 L207.1,141.0 L206.1,140.4 L205.2,139.9 L204.2,139.3 L203.3,138.8 L202.3,135.9 L201.4,131.6 L200.4,128.9 L199.5,126.7 L198.5,124.8 L197.6,123.1 L196.6,121.5 L195.7,120.0 L194.7,118.6 L193.8,117.3 L192.8,116.0 L191.9,114.7 L190.9,113.6 L190.0,112.4 L189.0,111.3 L188.1,110.2 L187.1,109.2 L186.2,108.2 L185.2,107.2 L184.3,106.2 L183.3,105.3 L182.4,104.4 L181.4,103.5 L180.5,102.6 L179.5,101.7 L178.6,100.9 L177.6,100.1 L176.7,99.3 L175.7,98.5 L174.8,97.7 L173.8,96.9 L172.9,96.2 L171.9,95.5 L171.0,94.8 L170.0,94.1 L169.1,93.4 L168.1,92.7 L167.2,92.1 L166.2,91.4 L165.3,90.8 L164.3,90.2 L163.4,89.6 L162.4,89.0 L161.5,88.4 L160.5,87.8 L159.6,87.3 L158.6,86.8 L157.7,86.4 L156.7,86.0 L155.8,85.6 L154.8,85.4 L153.9,85.1 L152.9,85.0 L152.0,84.9 L151.0,84.8 L150.1,84.9 L149.1,85.0M140.6,92.1 L139.6,95.1 L138.7,101.1 L137.7,100.5 L136.8,100.0 L135.8,99.4 L134.9,98.9 L133.9,98.3 L133.0,97.8 L132.0,97.2 L131.1,96.7 L130.1,96.1 L129.2,95.5 L128.2,95.0 L127.3,94.4 L126.3,93.9 L125.4,93.3 L124.4,92.8 L123.5,92.2 L122.5,91.7 L121.6,91.1 L120.6,90.6 L119.7,90.0 L118.7,89.4 L117.8,88.9 L116.8,88.3 L115.9,87.8 L114.9,87.2 L114.0,86.7 L113.0,86.1 L112.1,85.6 L111.1,85.0 L110.2,84.5 L109.2,83.9 L108.3,83.4 L107.3,82.8 L106.4,82.2 L109.1,80.7 L110.0,81.3 L111.0,81.8 L111.9,82.4 L112.9,82.9 L113.8,83.5 L114.8,84.1 L115.7,84.6 L116.7,85.2 L117.6,85.7 L118.6,86.3 L119.5,86.8 L120.5,87.4 L121.4,87.9 L122.4,88.5 L123.3,89.0 L124.3,89.6 L125.2,90.2 L126.2,90.7 L127.1,91.3 L128.1,91.8 L129.0,92.4 L130.0,92.9 L130.9,93.5 L131.9,94.0 L132.8,94.6 L133.8,95.1 L134.7,95.7 L135.7,96.2 L136.6,96.8 L137.6,97.4 L138.5,97.9 L139.5,98.5 L140.4,99.0 L141.4,99.6M149.9,83.9 L150.9,83.6 L151.8,83.5 L152.8,83.3 L153.7,83.3 L154.7,83.4 L155.6,83.5 L156.6,83.6 L157.5,83.8 L158.5,84.1 L159.4,84.5 L160.4,84.9 L161.3,85.3 L162.3,85.8 L163.2,86.3 L164.2,86.9 L165.1,87.5 L166.1,88.0 L167.0,88.7 L168.0,89.3 L168.9,89.9 L169.9,90.5 L170.8,91.2 L171.8,91.9 L172.7,92.5 L173.7,93.2 L174.6,94.0 L175.6,94.7 L176.5,95.4 L177.5,96.2 L178.4,97.0 L179.4,97.7 L180.3,98.5 L181.3,99.4 L182.2,100.2 L183.2,101.1 L184.1,101.9 L185.1,102.8 L186.0,103.8 L187.0,104.7 L187.9,105.7 L188.9,106.7 L189.8,107.7 L190.8,108.7 L191.7,109.8 L192.7,110.9 L193.6,112.0 L194.6,113.2 L195.5,114.5 L196.5,115.7 L197.4,117.1 L198.4,118.5 L199.3,120.0 L200.3,121.6 L201.2,123.3 L202.2,125.2 L203.1,127.4 L204.1,130.1 L205.0,134.4 L206.0,137.3 L206.9,137.8 L207.9,138.4 L208.8,138.9 L209.8,139.5 L210.7,140.0 L211.7,140.6 L212.6,141.1 L213.6,141.7 L214.5,142.2 L215.5,142.8 L216.4,143.4 L217.4,143.9 L218.3,144.5 L219.3,145.0 L220.2,145.6 L221.2,146.1 L222.1,146.7 L223.1,147.2 L225.8,145.7 L224.9,145.2 L223.9,144.6 L223.0,144.1 L222.0,143.5 L221.1,142.9 L220.1,142.4 L219.2,141.8 L218.2,141.3 L217.3,140.7 L216.3,140.2 L215.4,139.6 L214.4,139.1 L213.5,138.5 L212.5,138.0 L211.6,137.4 L210.6,136.9 L209.7,136.3 L208.7,135.7 L207.8,132.9 L206.8,128.6 L205.9,125.9 L204.9,123.7 L204.0,121.8 L203.0,120.1 L202.1,118.5 L201.1,117.0 L200.2,115.6 L199.2,114.2 L198.3,112.9 L197.3,111.7 L196.4,110.5 L195.4,109.4 L194.5,108.3 L193.5,107.2 L192.6,106.2 L191.6,105.1 L190.7,104.2 L189.7,103.2 L188.8,102.2 L187.8,101.3 L186.9,100.4 L185.9,99.6 L185.0,98.7 L184.0,97.9 L183.1,97.0 L182.1,96.2 L181.2,95.4 L180.2,94.7 L179.3,93.9 L178.3,93.2 L177.4,92.4 L176.4,91.7 L175.5,91.0 L174.5,90.4 L173.6,89.7 L172.6,89.0 L171.7,88.4 L170.7,87.8 L169.8,87.1 L168.8,86.5 L167.9,85.9 L166.9,85.4 L166.0,84.8 L165.0,84.3 L164.1,83.8 L163.1,83.3 L162.2,83.0 L161.2,82.6 L160.3,82.3 L159.3,82.1 L158.4,81.9 L157.4,81.8 L156.5,81.8 L155.5,81.8 L154.6,81.9M146.0,89.1 L145.1,92.1 L144.1,98.1 L143.2,97.5 L142.2,97.0 L141.3,96.4 L140.3,95.8 L139.4,95.3 L138.4,94.7 L137.5,94.2 L136.5,93.6 L135.6,93.1 L134.6,92.5 L133.7,92.0 L132.7,91.4 L131.8,90.9 L130.8,90.3 L129.9,89.7 L128.9,89.2 L128.0,88.6 L127.0,88.1 L126.1,87.5 L125.1,87.0 L124.2,86.4 L123.2,85.9 L122.3,85.3 L121.3,84.8 L120.4,84.2 L119.4,83.7 L118.5,83.1 L117.5,82.5 L116.6,82.0 L115.6,81.4 L114.7,80.9 L113.7,80.3 L112.8,79.8 L111.8,79.2 L114.6,77.7 L115.5,78.3 L116.5,78.8 L117.4,79.4 L118.4,79.9 L119.3,80.5 L120.3,81.0 L121.2,81.6 L122.2,82.1 L123.1,82.7 L124.1,83.2 L125.0,83.8 L126.0,84.4 L126.9,84.9 L127.9,85.5 L128.8,86.0 L129.8,86.6 L130.7,87.1 L131.7,87.7 L132.6,88.2 L133.6,88.8 L134.5,89.3 L135.5,89.9 L136.4,90.5 L137.4,91.0 L138.3,91.6 L139.3,92.1 L140.2,92.7 L141.2,93.2 L142.1,93.8 L143.1,94.3 L144.0,94.9 L145.0,95.4 L145.9,96.0 L146.9,96.5M155.4,80.9 L156.4,80.6 L157.3,80.4 L158.3,80.3 L159.2,80.3 L160.2,80.3 L161.1,80.4 L162.1,80.6 L163.0,80.8 L164.0,81.1 L164.9,81.4 L165.9,81.8 L166.8,82.3 L167.8,82.8 L168.7,83.3 L169.7,83.9 L170.6,84.4 L171.6,85.0 L172.5,85.6 L173.5,86.2 L174.4,86.9 L175.4,87.5 L176.3,88.2 L177.3,88.8 L178.2,89.5 L179.2,90.2 L180.1,90.9 L181.1,91.7 L182.0,92.4 L183.0,93.2 L183.9,93.9 L184.9,94.7 L185.8,95.5 L186.8,96.3 L187.7,97.2 L188.7,98.0 L189.6,98.9 L190.6,99.8 L191.5,100.7 L192.5,101.7 L193.4,102.6 L194.4,103.6 L195.3,104.6 L196.3,105.7 L197.2,106.8 L198.2,107.9 L199.1,109.0 L200.1,110.2 L201.0,111.4 L202.0,112.7 L202.9,114.1 L203.9,115.5 L204.8,117.0 L205.8,118.6 L206.7,120.3 L207.7,122.2 L208.6,124.4 L209.6,127.0 L210.5,131.4 L211.5,134.2 L212.4,134.8 L213.4,135.3 L214.3,135.9 L215.3,136.4 L216.2,137.0 L217.2,137.6 L218.1,138.1 L219.1,138.7 L220.0,139.2 L221.0,139.8 L221.9,140.3 L222.9,140.9 L223.8,141.4 L224.8,142.0 L225.7,142.5 L226.7,143.1 L227.6,143.7 L228.6,144.2 L231.3,142.7 L230.3,142.1 L229.4,141.6 L228.4,141.0 L227.5,140.5 L226.5,139.9 L225.6,139.4 L224.6,138.8 L223.7,138.3 L222.7,137.7 L221.8,137.2 L220.8,136.6 L219.9,136.0 L218.9,135.5 L218.0,134.9 L217.0,134.4 L216.1,133.8 L215.1,133.3 L214.2,132.7 L213.2,129.8 L212.3,125.5 L211.3,122.9 L210.4,120.7 L209.4,118.8 L208.5,117.0 L207.5,115.4 L206.6,114.0 L205.6,112.5 L204.7,111.2 L203.7,109.9 L202.8,108.7 L201.8,107.5 L200.9,106.4 L199.9,105.3 L199.0,104.2 L198.0,103.1 L197.1,102.1 L196.1,101.1 L195.2,100.2 L194.2,99.2 L193.3,98.3 L192.3,97.4 L191.4,96.5 L190.4,95.7 L189.5,94.8 L188.5,94.0 L187.6,93.2 L186.6,92.4 L185.7,91.6 L184.7,90.9 L183.8,90.1 L182.8,89.4 L181.9,88.7 L180.9,88.0 L180.0,87.3 L179.0,86.7 L178.1,86.0 L177.1,85.4 L176.2,84.7 L175.2,84.1 L174.3,83.5 L173.3,82.9 L172.4,82.3 L171.4,81.8 L170.5,81.2 L169.5,80.8 L168.6,80.3 L167.6,79.9 L166.7,79.6 L165.7,79.3 L164.8,79.1 L163.8,78.9 L162.9,78.8 L161.9,78.8 L161.0,78.8 L160.0,78.9M151.5,86.1 L150.5,89.1 L149.6,95.0 L148.6,94.5 L147.7,93.9 L146.7,93.4 L145.8,92.8 L144.8,92.3 L143.9,91.7 L142.9,91.2 L142.0,90.6 L141.0,90.0 L140.1,89.5 L139.1,88.9 L138.2,88.4 L137.2,87.8 L136.3,87.3 L135.3,86.7 L134.4,86.2 L133.4,85.6 L132.5,85.1 L131.5,84.5 L130.6,84.0 L129.6,83.4 L128.7,82.8 L127.7,82.3 L126.8,81.7 L125.8,81.2 L124.9,80.6 L123.9,80.1 L123.0,79.5 L122.0,79.0 L121.1,78.4 L120.1,77.9 L119.2,77.3 L118.2,76.7 L117.3,76.2 L120.0,74.7 L121.0,75.2 L121.9,75.8 L122.9,76.3 L123.8,76.9 L124.8,77.5 L125.7,78.0 L126.7,78.6 L127.6,79.1 L128.6,79.7 L129.5,80.2 L130.5,80.8 L131.4,81.3 L132.4,81.9 L133.3,82.4 L134.3,83.0 L135.2,83.5 L136.2,84.1 L137.1,84.7 L138.1,85.2 L139.0,85.8 L140.0,86.3 L140.9,86.9 L141.9,87.4 L142.8,88.0 L143.8,88.5 L144.7,89.1 L145.7,89.6 L146.6,90.2 L147.6,90.8 L148.5,91.3 L149.5,91.9 L150.4,92.4 L151.4,93.0 L152.3,93.5M160.9,77.9 L161.8,77.6 L162.8,77.4 L163.7,77.3 L164.7,77.3 L165.6,77.3 L166.6,77.4 L167.5,77.6 L168.5,77.8 L169.4,78.1 L170.4,78.4 L171.3,78.8 L172.3,79.2 L173.2,79.7 L174.2,80.3 L175.1,80.8 L176.1,81.4 L177.0,82.0 L178.0,82.6 L178.9,83.2 L179.9,83.8 L180.8,84.5 L181.8,85.1 L182.7,85.8 L183.7,86.5 L184.6,87.2 L185.6,87.9 L186.5,88.6 L187.5,89.4 L188.4,90.1 L189.4,90.9 L190.3,91.7 L191.3,92.5 L192.2,93.3 L193.2,94.2 L194.1,95.0 L195.1,95.9 L196.0,96.8 L197.0,97.7 L197.9,98.7 L198.9,99.6 L199.8,100.6 L200.8,101.6 L201.7,102.7 L202.7,103.7 L203.6,104.8 L204.6,106.0 L205.5,107.2 L206.5,108.4 L207.4,109.7 L208.4,111.0 L209.3,112.4 L210.3,113.9 L211.2,115.5 L212.2,117.3 L213.1,119.2 L214.1,121.3 L215.0,124.0 L216.0,128.3 L216.9,131.2 L217.9,131.8 L218.8,132.3 L219.8,132.9 L220.7,133.4 L221.7,134.0 L222.6,134.5 L223.6,135.1 L224.5,135.6 L225.5,136.2 L226.4,136.7 L227.4,137.3 L228.3,137.9 L229.3,138.4 L230.2,139.0 L231.2,139.5 L232.1,140.1 L233.1,140.6 L234.0,141.2 L236.8,139.7 L235.8,139.1 L234.9,138.6 L233.9,138.0 L233.0,137.5 L232.0,136.9 L231.1,136.3 L230.1,135.8 L229.2,135.2 L228.2,134.7 L227.3,134.1 L226.3,133.6 L225.4,133.0 L224.4,132.5 L223.5,131.9 L222.5,131.4 L221.6,130.8 L220.6,130.2 L219.7,129.7 L218.7,127.6 L217.8,122.7 L216.8,120.0 L215.9,117.8 L214.9,115.9 L214.0,114.1 L213.0,112.5 L212.1,111.0 L211.1,109.6 L210.2,108.3 L209.2,107.0 L208.3,105.7 L207.3,104.6 L206.4,103.4 L205.4,102.3 L204.5,101.2 L203.5,100.2 L202.6,99.2 L201.6,98.2 L200.7,97.2 L199.7,96.3 L198.8,95.3 L197.8,94.4 L196.9,93.6 L195.9,92.7 L195.0,91.9 L194.0,91.0 L193.1,90.2 L192.1,89.4 L191.2,88.7 L190.2,87.9 L189.3,87.2 L188.3,86.4 L187.4,85.7 L186.4,85.0 L185.5,84.4 L184.5,83.7 L183.6,83.0 L182.6,82.4 L181.7,81.8 L180.7,81.1 L179.8,80.5 L178.8,79.9 L177.9,79.4 L176.9,78.8 L176.0,78.3 L175.0,77.8 L174.1,77.3 L173.1,77.0 L172.2,76.6 L171.2,76.3 L170.3,76.1 L169.3,76.0 L168.4,75.8 L167.4,75.8 L166.5,75.8 L165.5,76.0M157.0,83.2 L156.0,86.2 L155.1,92.0 L154.1,91.5 L153.2,90.9 L152.2,90.3 L151.3,89.8 L150.3,89.2 L149.4,88.7 L148.4,88.1 L147.5,87.6 L146.5,87.0 L145.6,86.5 L144.6,85.9 L143.7,85.4 L142.7,84.8 L141.8,84.3 L140.8,83.7 L139.9,83.1 L138.9,82.6 L138.0,82.0 L137.0,81.5 L136.1,80.9 L135.1,80.4 L134.2,79.8 L133.2,79.3 L132.3,78.7 L131.3,78.2 L130.4,77.6 L129.4,77.0 L128.5,76.5 L127.5,75.9 L126.6,75.4 L125.6,74.8 L124.7,74.3 L123.7,73.7 L122.8,73.2 L125.5,71.7 L126.4,72.2 L127.4,72.8 L128.3,73.3 L129.3,73.9 L130.2,74.4 L131.2,75.0 L132.1,75.5 L133.1,76.1 L134.0,76.6 L135.0,77.2 L135.9,77.8 L136.9,78.3 L137.8,78.9 L138.8,79.4 L139.7,80.0 L140.7,80.5 L141.6,81.1 L142.6,81.6 L143.5,82.2 L144.5,82.7 L145.4,83.3 L146.4,83.9 L147.3,84.4 L148.3,85.0 L149.2,85.5 L150.2,86.1 L151.1,86.6 L152.1,87.2 L153.0,87.7 L154.0,88.3 L154.9,88.8 L155.9,89.4 L156.8,89.9 L157.8,90.5M167.3,75.1 L168.2,74.9 L169.2,74.8 L170.1,74.8 L171.1,74.8 L172.0,74.9 L173.0,75.0 L173.9,75.3 L174.9,75.5 L175.8,75.9 L176.8,76.3 L177.7,76.7 L178.7,77.2 L179.6,77.7 L180.6,78.3 L181.5,78.9 L182.5,79.4 L183.4,80.1 L184.4,80.7 L185.3,81.3 L186.3,81.9 L187.2,82.6 L188.2,83.3 L189.1,84.0 L190.1,84.7 L191.0,85.4 L192.0,86.1 L192.9,86.8 L193.9,87.6 L194.8,88.4 L195.8,89.2 L196.7,90.0 L197.7,90.8 L198.6,91.7 L199.6,92.5 L200.5,93.4 L201.5,94.3 L202.4,95.2 L203.4,96.2 L204.3,97.2 L205.3,98.2 L206.2,99.2 L207.2,100.3 L208.1,101.4 L209.1,102.5 L210.0,103.7 L211.0,104.9 L211.9,106.1 L212.9,107.5 L213.8,108.8 L214.8,110.3 L215.7,111.9 L216.7,113.5 L217.6,115.4 L218.6,117.5 L219.5,120.0 L220.5,123.7 L221.4,127.6 L222.4,128.2 L223.3,128.7 L224.3,129.3 L225.2,129.8 L226.2,130.4 L227.1,131.0 L228.1,131.5 L229.0,132.1 L230.0,132.6 L230.9,133.2 L231.9,133.7 L232.8,134.3 L233.8,134.8 L234.7,135.4 L235.7,135.9 L236.6,136.5 L237.6,137.1 L238.5,137.6 L239.5,138.2 L242.2,136.6 L241.3,136.1 L240.3,135.5 L239.4,135.0 L238.4,134.4 L237.5,133.9 L236.5,133.3 L235.6,132.8 L234.6,132.2 L233.7,131.7 L232.7,131.1 L231.8,130.6 L230.8,130.0 L229.9,129.4 L228.9,128.9 L228.0,128.3 L227.0,127.8 L226.1,127.2 L225.1,126.7 L224.2,126.1 L223.2,125.6 L222.3,125.0 L221.3,119.0 L220.4,116.2 L219.4,114.0 L218.5,112.1 L217.5,110.4 L216.6,108.8 L215.6,107.3 L214.7,105.9 L213.7,104.6 L212.8,103.4 L211.8,102.1 L210.9,101.0 L209.9,99.8 L209.0,98.8 L208.0,97.7 L207.1,96.7 L206.1,95.7 L205.2,94.7 L204.2,93.8 L203.3,92.8 L202.3,91.9 L201.4,91.1 L200.4,90.2 L199.5,89.4 L198.5,88.5 L197.6,87.7 L196.6,87.0 L195.7,86.2 L194.7,85.4 L193.8,84.7 L192.8,84.0 L191.9,83.3 L190.9,82.6 L190.0,81.9 L189.0,81.2 L188.1,80.6 L187.1,80.0 L186.2,79.3 L185.2,78.7 L184.3,78.1 L183.3,77.6 L182.4,77.0 L181.4,76.5 L180.5,76.0 L179.5,75.5 L178.6,75.2 L177.6,74.8 L176.7,74.6 L175.7,74.4 L174.8,74.2 L173.8,74.2 L172.9,74.1 L171.9,74.2M163.4,81.1 L162.4,84.2 L161.5,89.5 L160.5,89.0 L159.6,88.4 L158.6,87.9 L157.7,87.3 L156.7,86.8 L155.8,86.2 L154.8,85.7 L153.9,85.1 L152.9,84.6 L152.0,84.0 L151.0,83.4 L150.1,82.9 L149.1,82.3 L148.2,81.8 L147.2,81.2 L146.3,80.7 L145.3,80.1 L144.4,79.6 L143.4,79.0 L142.5,78.5 L141.5,77.9 L140.6,77.4 L139.6,76.8 L138.7,76.2 L137.7,75.7 L136.8,75.1 L135.8,74.6 L134.9,74.0 L133.9,73.5 L133.0,72.9 L132.0,72.4 L131.1,71.8 L130.1,71.3 L129.2,70.7 L128.2,70.1 L131.0,68.6 L131.9,69.2 L132.9,69.7 L133.8,70.3 L134.8,70.9 L135.7,71.4 L136.7,72.0 L137.6,72.5 L138.6,73.1 L139.5,73.6 L140.5,74.2 L141.4,74.7 L142.4,75.3 L143.3,75.8 L144.3,76.4 L145.2,76.9 L146.2,77.5 L147.1,78.1 L148.1,78.6 L149.0,79.2 L150.0,79.7 L150.9,80.3 L151.9,80.8 L152.8,81.4 L153.8,81.9 L154.7,82.5 L155.7,83.0 L156.6,83.6 L157.6,84.2 L158.5,84.7 L159.5,85.3 L160.4,85.8 L161.4,86.4 L162.3,86.9 L163.3,87.5 L164.2,88.0 L165.2,88.6M173.7,74.2 L174.7,74.0 L175.6,73.9 L176.6,73.9 L177.5,73.9 L178.5,74.1 L179.4,74.3 L180.4,74.5 L181.3,74.8 L182.3,75.2 L183.2,75.6 L184.2,76.1 L185.1,76.6 L186.1,77.2 L187.0,77.8 L188.0,78.4 L188.9,79.0 L189.9,79.6 L190.8,80.2 L191.8,80.9 L192.7,81.6 L193.7,82.2 L194.6,82.9 L195.6,83.6 L196.5,84.4 L197.5,85.1 L198.4,85.9 L199.4,86.7 L200.3,87.5 L201.3,88.3 L202.2,89.1 L203.2,90.0 L204.1,90.9 L205.1,91.8 L206.0,92.7 L207.0,93.6 L207.9,94.6 L208.9,95.6 L209.8,96.6 L210.8,97.7 L211.7,98.8 L212.7,99.9 L213.6,101.1 L214.6,102.4 L215.5,103.7 L216.5,105.0 L217.4,106.5 L218.4,108.0 L219.3,109.7 L220.3,111.6 L221.2,113.7 L222.2,116.4 L223.1,121.3 L224.1,122.9 L225.0,123.5 L226.0,124.1 L226.9,124.6 L227.9,125.2 L228.8,125.7 L229.8,126.3 L230.7,126.8 L231.7,127.4 L232.6,127.9 L233.6,128.5 L234.5,129.0 L235.5,129.6 L236.4,130.1 L237.4,130.7 L238.3,131.3 L239.3,131.8 L240.2,132.4 L241.2,132.9 L242.1,133.5 L243.1,134.0 L244.0,134.6 L245.0,135.1 L247.7,133.6 L246.7,133.1 L245.8,132.5 L244.8,132.0 L243.9,131.4 L242.9,130.9 L242.0,130.3 L241.0,129.7 L240.1,129.2 L239.1,128.6 L238.2,128.1 L237.2,127.5 L236.3,127.0 L235.3,126.4 L234.4,125.9 L233.4,125.3 L232.5,124.8 L231.5,124.2 L230.6,123.6 L229.6,123.1 L228.7,122.5 L227.7,122.0 L226.8,121.4 L225.8,120.9 L224.9,120.3 L223.9,119.8 L223.0,115.3 L222.0,112.2 L221.1,109.9 L220.1,108.0 L219.2,106.3 L218.2,104.7 L217.3,103.3 L216.3,101.9 L215.4,100.6 L214.4,99.4 L213.5,98.2 L212.5,97.1 L211.6,96.0 L210.6,94.9 L209.7,93.9 L208.7,92.9 L207.8,92.0 L206.8,91.0 L205.9,90.1 L204.9,89.2 L204.0,88.4 L203.0,87.5 L202.1,86.7 L201.1,85.9 L200.2,85.2 L199.2,84.4 L198.3,83.7 L197.3,82.9 L196.4,82.2 L195.4,81.5 L194.5,80.9 L193.5,80.2 L192.6,79.6 L191.6,78.9 L190.7,78.3 L189.7,77.7 L188.8,77.1 L187.8,76.6 L186.9,76.0 L185.9,75.6 L185.0,75.1 L184.0,74.8 L183.1,74.5 L182.1,74.3 L181.2,74.1 L180.2,74.0 L179.3,74.0 L178.3,74.1M170.7,80.4 L169.8,83.9 L168.8,87.6 L167.9,87.1 L166.9,86.5 L166.0,86.0 L165.0,85.4 L164.1,84.9 L163.1,84.3 L162.2,83.7 L161.2,83.2 L160.3,82.6 L159.3,82.1 L158.4,81.5 L157.4,81.0 L156.5,80.4 L155.5,79.9 L154.6,79.3 L153.6,78.8 L152.7,78.2 L151.7,77.7 L150.8,77.1 L149.8,76.5 L148.9,76.0 L147.9,75.4 L147.0,74.9 L146.0,74.3 L145.1,73.8 L144.1,73.2 L143.2,72.7 L142.2,72.1 L141.3,71.6 L140.3,71.0 L139.4,70.4 L138.4,69.9 L137.5,69.3 L136.5,68.8 L135.6,68.2 L134.6,67.7 L133.7,67.1 L136.4,65.6 L137.4,66.2 L138.3,66.7 L139.3,67.3 L140.2,67.8 L141.2,68.4 L142.1,68.9 L143.1,69.5 L144.0,70.0 L145.0,70.6 L145.9,71.2 L146.9,71.7 L147.8,72.3 L148.8,72.8 L149.7,73.4 L150.7,73.9 L151.6,74.5 L152.6,75.0 L153.5,75.6 L154.5,76.1 L155.4,76.7 L156.4,77.2 L157.3,77.8 L158.3,78.4 L159.2,78.9 L160.2,79.5 L161.1,80.0 L162.1,80.6 L163.0,81.1 L164.0,81.7 L164.9,82.2 L165.9,82.8 L166.8,83.3 L167.8,83.9 L168.7,84.5 L169.7,85.0 L170.6,85.6 L171.6,86.1 L172.5,86.7 L173.5,87.2M180.1,74.9 L181.1,74.6 L182.0,74.5 L183.0,74.4 L183.9,74.5 L184.9,74.6 L185.8,74.8 L186.8,75.0 L187.7,75.4 L188.7,75.8 L189.6,76.3 L190.6,76.8 L191.5,77.4 L192.5,78.0 L193.4,78.5 L194.4,79.2 L195.3,79.8 L196.3,80.4 L197.2,81.1 L198.2,81.8 L199.1,82.5 L200.1,83.2 L201.0,84.0 L202.0,84.7 L202.9,85.5 L203.9,86.3 L204.8,87.1 L205.8,88.0 L206.7,88.8 L207.7,89.7 L208.6,90.7 L209.6,91.6 L210.5,92.6 L211.5,93.6 L212.4,94.7 L213.4,95.8 L214.3,96.9 L215.3,98.1 L216.2,99.3 L217.2,100.6 L218.1,102.0 L219.1,103.6 L220.0,105.2 L221.0,107.1 L221.9,109.2 L222.9,112.2 L223.8,116.6 L224.8,117.1 L225.7,117.7 L226.7,118.3 L227.6,118.8 L228.6,119.4 L229.5,119.9 L230.5,120.5 L231.4,121.0 L232.4,121.6 L233.3,122.1 L234.3,122.7 L235.2,123.2 L236.2,123.8 L237.1,124.4 L238.1,124.9 L239.0,125.5 L240.0,126.0 L240.9,126.6 L241.9,127.1 L242.8,127.7 L243.8,128.2 L244.7,128.8 L245.7,129.3 L246.6,129.9 L247.6,130.4 L248.5,131.0 L249.5,131.6 L250.4,132.1 L253.1,130.6 L252.2,130.0 L251.2,129.5 L250.3,128.9 L249.3,128.4 L248.4,127.8 L247.4,127.3 L246.5,126.7 L245.5,126.2 L244.6,125.6 L243.6,125.1 L242.7,124.5 L241.7,123.9 L240.8,123.4 L239.8,122.8 L238.9,122.3 L237.9,121.7 L237.0,121.2 L236.0,120.6 L235.1,120.1 L234.1,119.5 L233.2,119.0 L232.2,118.4 L231.3,117.9 L230.3,117.3 L229.4,116.7 L228.4,116.2 L227.5,115.6 L226.5,115.1 L225.6,114.5 L224.6,114.0 L223.7,113.4 L222.7,110.8 L221.8,107.2 L220.8,104.9 L219.9,103.0 L218.9,101.4 L218.0,99.9 L217.0,98.5 L216.1,97.2 L215.1,96.0 L214.2,94.8 L213.2,93.7 L212.3,92.6 L211.3,91.6 L210.4,90.6 L209.4,89.7 L208.5,88.8 L207.5,87.9 L206.6,87.0 L205.6,86.2 L204.7,85.4 L203.7,84.6 L202.8,83.8 L201.8,83.1 L200.9,82.4 L199.9,81.7 L199.0,81.0 L198.0,80.3 L197.1,79.7 L196.1,79.0 L195.2,78.4 L194.2,77.9 L193.3,77.3 L192.3,76.8 L191.4,76.3 L190.4,75.9 L189.5,75.6 L188.5,75.3 L187.6,75.2 L186.6,75.1 L185.7,75.2M179.0,80.5 L178.1,84.5 L177.1,86.3 L176.2,85.7 L175.2,85.2 L174.3,84.6 L173.3,84.0 L172.4,83.5 L171.4,82.9 L170.5,82.4 L169.5,81.8 L168.6,81.3 L167.6,80.7 L166.7,80.2 L165.7,79.6 L164.8,79.1 L163.8,78.5 L162.9,78.0 L161.9,77.4 L161.0,76.8 L160.0,76.3 L159.1,75.7 L158.1,75.2 L157.2,74.6 L156.2,74.1 L155.3,73.5 L154.3,73.0 L153.4,72.4 L152.4,71.9 L151.5,71.3 L150.5,70.7 L149.6,70.2 L148.6,69.6 L147.7,69.1 L146.7,68.5 L145.8,68.0 L144.8,67.4 L143.9,66.9 L142.9,66.3 L142.0,65.8 L141.0,65.2 L140.1,64.7 L139.1,64.1 L141.9,62.6 L142.8,63.1 L143.8,63.7 L144.7,64.2 L145.7,64.8 L146.6,65.4 L147.6,65.9 L148.5,66.5 L149.5,67.0 L150.4,67.6 L151.4,68.1 L152.3,68.7 L153.3,69.2 L154.2,69.8 L155.2,70.3 L156.1,70.9 L157.1,71.5 L158.0,72.0 L159.0,72.6 L159.9,73.1 L160.9,73.7 L161.8,74.2 L162.8,74.8 L163.7,75.3 L164.7,75.9 L165.6,76.4 L166.6,77.0 L167.5,77.5 L168.5,78.1 L169.4,78.7 L170.4,79.2 L171.3,79.8 L172.3,80.3 L173.2,80.9 L174.2,81.4 L175.1,82.0 L176.1,82.5 L177.0,83.1 L178.0,83.6 L178.9,84.2 L179.9,84.8 L180.8,85.3 L181.8,85.9M187.5,76.6 L188.4,76.3 L189.4,76.1 L190.3,76.1 L191.3,76.2 L192.2,76.4 L193.2,76.7 L194.1,77.0 L195.1,77.5 L196.0,78.0 L197.0,78.6 L197.9,79.2 L198.9,79.8 L199.8,80.4 L200.8,81.1 L201.7,81.8 L202.7,82.5 L203.6,83.2 L204.6,83.9 L205.5,84.7 L206.5,85.5 L207.4,86.3 L208.4,87.2 L209.3,88.1 L210.3,89.0 L211.2,89.9 L212.2,90.9 L213.1,92.0 L214.1,93.1 L215.0,94.2 L216.0,95.4 L216.9,96.7 L217.9,98.1 L218.8,99.7 L219.8,101.4 L220.7,103.5 L221.7,106.5 L222.6,109.7 L223.6,110.2 L224.5,110.8 L225.5,111.4 L226.4,111.9 L227.4,112.5 L228.3,113.0 L229.3,113.6 L230.2,114.1 L231.2,114.7 L232.1,115.2 L233.1,115.8 L234.0,116.3 L235.0,116.9 L235.9,117.4 L236.9,118.0 L237.8,118.6 L238.8,119.1 L239.7,119.7 L240.7,120.2 L241.6,120.8 L242.6,121.3 L243.5,121.9 L244.5,122.4 L245.4,123.0 L246.4,123.5 L247.3,124.1 L248.3,124.7 L249.2,125.2 L250.2,125.8 L251.1,126.3 L252.1,126.9 L253.0,127.4 L254.0,128.0 L254.9,128.5 L255.9,129.1 L258.6,127.6 L257.7,127.0 L256.7,126.5 L255.8,125.9 L254.8,125.4 L253.9,124.8 L252.9,124.2 L252.0,123.7 L251.0,123.1 L250.1,122.6 L249.1,122.0 L248.2,121.5 L247.2,120.9 L246.3,120.4 L245.3,119.8 L244.4,119.3 L243.4,118.7 L242.5,118.2 L241.5,117.6 L240.6,117.0 L239.6,116.5 L238.7,115.9 L237.7,115.4 L236.8,114.8 L235.8,114.3 L234.9,113.7 L233.9,113.2 L233.0,112.6 L232.0,112.1 L231.1,111.5 L230.1,110.9 L229.2,110.4 L228.2,109.8 L227.3,109.3 L226.3,108.7 L225.4,108.2 L224.4,107.6 L223.5,107.1 L222.5,106.5 L221.6,106.0 L220.6,104.1 L219.7,100.6 L218.7,98.5 L217.8,96.8 L216.8,95.4 L215.9,94.0 L214.9,92.8 L214.0,91.6 L213.0,90.6 L212.1,89.5 L211.1,88.6 L210.2,87.6 L209.2,86.7 L208.3,85.9 L207.3,85.1 L206.4,84.3 L205.4,83.5 L204.5,82.8 L203.5,82.1 L202.6,81.4 L201.6,80.8 L200.7,80.2 L199.7,79.6 L198.8,79.0 L197.8,78.5 L196.9,78.0 L195.9,77.7 L195.0,77.5 L194.0,77.4M188.3,80.9 L187.4,84.9 L186.4,85.5 L185.5,84.9 L184.5,84.3 L183.6,83.8 L182.6,83.2 L181.7,82.7 L180.7,82.1 L179.8,81.6 L178.8,81.0 L177.9,80.5 L176.9,79.9 L176.0,79.4 L175.0,78.8 L174.1,78.3 L173.1,77.7 L172.2,77.1 L171.2,76.6 L170.3,76.0 L169.3,75.5 L168.4,74.9 L167.4,74.4 L166.5,73.8 L165.5,73.3 L164.6,72.7 L163.6,72.2 L162.7,71.6 L161.7,71.0 L160.8,70.5 L159.8,69.9 L158.9,69.4 L157.9,68.8 L157.0,68.3 L156.0,67.7 L155.1,67.2 L154.1,66.6 L153.2,66.1 L152.2,65.5 L151.3,65.0 L150.3,64.4 L149.4,63.8 L148.4,63.3 L147.5,62.7 L146.5,62.2 L145.6,61.6 L144.6,61.1 L147.3,59.6 L148.3,60.1 L149.2,60.7 L150.2,61.2 L151.1,61.8 L152.1,62.3 L153.0,62.9 L154.0,63.4 L154.9,64.0 L155.9,64.5 L156.8,65.1 L157.8,65.7 L158.7,66.2 L159.7,66.8 L160.6,67.3 L161.6,67.9 L162.5,68.4 L163.5,69.0 L164.4,69.5 L165.4,70.1 L166.3,70.6 L167.3,71.2 L168.2,71.8 L169.2,72.3 L170.1,72.9 L171.1,73.4 L172.0,74.0 L173.0,74.5 L173.9,75.1 L174.9,75.6 L175.8,76.2 L176.8,76.7 L177.7,77.3 L178.7,77.8 L179.6,78.4 L180.6,79.0 L181.5,79.5 L182.5,80.1 L183.4,80.6 L184.4,81.2 L185.3,81.7 L186.3,82.3 L187.2,82.8 L188.2,83.4 L189.1,83.9 L190.1,84.5 L191.0,85.1 L192.0,85.6M195.8,79.1 L196.7,78.9 L197.7,78.8 L198.6,79.0 L199.6,79.3 L200.5,79.7 L201.5,80.2 L202.4,80.8 L203.4,81.4 L204.3,82.0 L205.3,82.7 L206.2,83.4 L207.2,84.1 L208.1,84.9 L209.1,85.7 L210.0,86.6 L211.0,87.5 L211.9,88.4 L212.9,89.5 L213.8,90.5 L214.8,91.7 L215.7,93.0 L216.7,94.5 L217.6,96.2 L218.6,98.6 L219.5,101.7 L220.5,102.2 L221.4,102.8 L222.4,103.3 L223.3,103.9 L224.3,104.4 L225.2,105.0 L226.2,105.6 L227.1,106.1 L228.1,106.7 L229.0,107.2 L230.0,107.8 L230.9,108.3 L231.9,108.9 L232.8,109.4 L233.8,110.0 L234.7,110.5 L235.7,111.1 L236.6,111.7 L237.6,112.2 L238.5,112.8 L239.5,113.3 L240.4,113.9 L241.4,114.4 L242.3,115.0 L243.3,115.5 L244.2,116.1 L245.2,116.6 L246.1,117.2 L247.1,117.7 L248.0,118.3 L249.0,118.9 L249.9,119.4 L250.9,120.0 L251.8,120.5 L252.8,121.1 L253.7,121.6 L254.7,122.2 L255.6,122.7 L256.6,123.3 L257.5,123.8 L258.5,124.4 L259.4,125.0 L260.4,125.5 L261.3,126.1 L264.1,124.5 L263.1,124.0 L262.2,123.4 L261.2,122.9 L260.3,122.3 L259.3,121.8 L258.4,121.2 L257.4,120.7 L256.5,120.1 L255.5,119.6 L254.6,119.0 L253.6,118.5 L252.7,117.9 L251.7,117.3 L250.8,116.8 L249.8,116.2 L248.9,115.7 L247.9,115.1 L247.0,114.6 L246.0,114.0 L245.1,113.5 L244.1,112.9 L243.2,112.4 L242.2,111.8 L241.3,111.2 L240.3,110.7 L239.4,110.1 L238.4,109.6 L237.5,109.0 L236.5,108.5 L235.6,107.9 L234.6,107.4 L233.7,106.8 L232.7,106.3 L231.8,105.7 L230.8,105.2 L229.9,104.6 L228.9,104.0 L228.0,103.5 L227.0,102.9 L226.1,102.4 L225.1,101.8 L224.2,101.3 L223.2,100.7 L222.3,100.2 L221.3,99.6 L220.4,99.1 L219.4,98.5 L218.5,97.9 L217.5,97.4 L216.6,94.6 L215.6,92.5 L214.7,91.0 L213.7,89.7 L212.8,88.6 L211.8,87.6 L210.9,86.6 L209.9,85.8 L209.0,84.9 L208.0,84.2 L207.1,83.5 L206.1,82.8 L205.2,82.2 L204.2,81.6 L203.3,81.1 L202.3,80.7M198.5,81.7 L197.6,83.8 L196.6,85.2 L195.7,84.6 L194.7,84.1 L193.8,83.5 L192.8,83.0 L191.9,82.4 L190.9,81.9 L190.0,81.3 L189.0,80.8 L188.1,80.2 L187.1,79.7 L186.2,79.1 L185.2,78.6 L184.3,78.0 L183.3,77.4 L182.4,76.9 L181.4,76.3 L180.5,75.8 L179.5,75.2 L178.6,74.7 L177.6,74.1 L176.7,73.6 L175.7,73.0 L174.8,72.5 L173.8,71.9 L172.9,71.3 L171.9,70.8 L171.0,70.2 L170.0,69.7 L169.1,69.1 L168.1,68.6 L167.2,68.0 L166.2,67.5 L165.3,66.9 L164.3,66.4 L163.4,65.8 L162.4,65.3 L161.5,64.7 L160.5,64.1 L159.6,63.6 L158.6,63.0 L157.7,62.5 L156.7,61.9 L155.8,61.4 L154.8,60.8 L153.9,60.3 L152.9,59.7 L152.0,59.2 L151.0,58.6 L150.1,58.0 L152.8,56.5 L153.8,57.1 L154.7,57.6 L155.7,58.2 L156.6,58.8 L157.6,59.3 L158.5,59.9 L159.5,60.4 L160.4,61.0 L161.4,61.5 L162.3,62.1 L163.3,62.6 L164.2,63.2 L165.2,63.7 L166.1,64.3 L167.1,64.8 L168.0,65.4 L169.0,66.0 L169.9,66.5 L170.9,67.1 L171.8,67.6 L172.8,68.2 L173.7,68.7 L174.7,69.3 L175.6,69.8 L176.6,70.4 L177.5,70.9 L178.5,71.5 L179.4,72.1 L180.4,72.6 L181.3,73.2 L182.3,73.7 L183.2,74.3 L184.2,74.8 L185.1,75.4 L186.1,75.9 L187.0,76.5 L188.0,77.0 L188.9,77.6 L189.9,78.1 L190.8,78.7 L191.8,79.3 L192.7,79.8 L193.7,80.4 L194.6,80.9 L195.6,81.5 L196.5,82.0 L197.5,82.6 L198.4,83.1 L199.4,83.7 L200.3,84.2 L201.3,84.8 L202.2,85.4M204.1,82.7 L205.1,82.5 L206.0,82.7 L207.0,83.2 L207.9,83.8 L208.9,84.5 L209.8,85.2 L210.8,86.0 L211.7,87.0 L212.7,88.1 L213.6,89.4 L214.6,91.4 L215.5,93.1 L216.5,93.7 L217.4,94.2 L218.4,94.8 L219.3,95.3 L220.3,95.9 L221.2,96.4 L222.2,97.0 L223.1,97.5 L224.1,98.1 L225.0,98.7 L226.0,99.2 L226.9,99.8 L227.9,100.3 L228.8,100.9 L229.8,101.4 L230.7,102.0 L231.7,102.5 L232.6,103.1 L233.6,103.6 L234.5,104.2 L235.5,104.7 L236.4,105.3 L237.4,105.9 L238.3,106.4 L239.3,107.0 L240.2,107.5 L241.2,108.1 L242.1,108.6 L243.1,109.2 L244.0,109.7 L245.0,110.3 L245.9,110.8 L246.9,111.4 L247.8,112.0 L248.8,112.5 L249.7,113.1 L250.7,113.6 L251.6,114.2 L252.6,114.7 L253.5,115.3 L254.5,115.8 L255.4,116.4 L256.4,116.9 L257.3,117.5 L258.3,118.0 L259.2,118.6 L260.2,119.2 L261.1,119.7 L262.1,120.3 L263.0,120.8 L264.0,121.4 L264.9,121.9 L265.9,122.5 L266.8,123.0 L269.5,121.5 L268.6,121.0 L267.6,120.4 L266.7,119.9 L265.7,119.3 L264.8,118.8 L263.8,118.2 L262.9,117.6 L261.9,117.1 L261.0,116.5 L260.0,116.0 L259.1,115.4 L258.1,114.9 L257.2,114.3 L256.2,113.8 L255.3,113.2 L254.3,112.7 L253.4,112.1 L252.4,111.5 L251.5,111.0 L250.5,110.4 L249.6,109.9 L248.6,109.3 L247.7,108.8 L246.7,108.2 L245.8,107.7 L244.8,107.1 L243.9,106.6 L242.9,106.0 L242.0,105.5 L241.0,104.9 L240.1,104.3 L239.1,103.8 L238.2,103.2 L237.2,102.7 L236.3,102.1 L235.3,101.6 L234.4,101.0 L233.4,100.5 L232.5,99.9 L231.5,99.4 L230.6,98.8 L229.6,98.2 L228.7,97.7 L227.7,97.1 L226.8,96.6 L225.8,96.0 L224.9,95.5 L223.9,94.9 L223.0,94.4 L222.0,93.8 L221.1,93.3 L220.1,92.7 L219.2,92.2 L218.2,91.6 L217.3,91.0 L216.3,90.5 L215.4,89.9 L214.4,89.4 L213.5,88.8 L212.5,88.3 L211.6,86.7 L210.6,85.7M209.7,85.0 L208.7,84.6 L207.8,85.5 L206.8,84.9 L205.9,84.4 L204.9,83.8 L204.0,83.3 L203.0,82.7 L202.1,82.2 L201.1,81.6 L200.2,81.1 L199.2,80.5 L198.3,80.0 L197.3,79.4 L196.4,78.9 L195.4,78.3 L194.5,77.7 L193.5,77.2 L192.6,76.6 L191.6,76.1 L190.7,75.5 L189.7,75.0 L188.8,74.4 L187.8,73.9 L186.9,73.3 L185.9,72.8 L185.0,72.2 L184.0,71.6 L183.1,71.1 L182.1,70.5 L181.2,70.0 L180.2,69.4 L179.3,68.9 L178.3,68.3 L177.4,67.8 L176.4,67.2 L175.5,66.7 L174.5,66.1 L173.6,65.6 L172.6,65.0 L171.7,64.4 L170.7,63.9 L169.8,63.3 L168.8,62.8 L167.9,62.2 L166.9,61.7 L166.0,61.1 L165.0,60.6 L164.1,60.0 L163.1,59.5 L162.2,58.9 L161.2,58.3 L160.3,57.8 L159.3,57.2 L158.4,56.7 L157.4,56.1 L156.5,55.6 L155.5,55.0 L158.3,53.5 L159.2,54.1 L160.2,54.6 L161.1,55.2 L162.1,55.7 L163.0,56.3 L164.0,56.8 L164.9,57.4 L165.9,57.9 L166.8,58.5 L167.8,59.1 L168.7,59.6 L169.7,60.2 L170.6,60.7 L171.6,61.3 L172.5,61.8 L173.5,62.4 L174.4,62.9 L175.4,63.5 L176.3,64.0 L177.3,64.6 L178.2,65.1 L179.2,65.7 L180.1,66.3 L181.1,66.8 L182.0,67.4 L183.0,67.9 L183.9,68.5 L184.9,69.0 L185.8,69.6 L186.8,70.1 L187.7,70.7 L188.7,71.2 L189.6,71.8 L190.6,72.4 L191.5,72.9 L192.5,73.5 L193.4,74.0 L194.4,74.6 L195.3,75.1 L196.3,75.7 L197.2,76.2 L198.2,76.8 L199.1,77.3 L200.1,77.9 L201.0,78.4 L202.0,79.0 L202.9,79.6 L203.9,80.1 L204.8,80.7 L205.8,81.2 L206.7,81.8 L207.7,82.3 L208.6,82.9 L209.6,83.4 L210.5,84.0 L211.5,84.5 L212.4,85.1 L213.4,85.7 L214.3,86.2 L215.3,86.8 L216.2,87.3 L217.2,87.9 L218.1,88.4 L219.1,89.0 L220.0,89.5 L221.0,90.1 L221.9,90.6 L222.9,91.2 L223.8,91.7 L224.8,92.3 L225.7,92.9 L226.7,93.4 L227.6,94.0 L228.6,94.5 L229.5,95.1 L230.5,95.6 L231.4,96.2 L232.4,96.7 L233.3,97.3 L234.3,97.8 L235.2,98.4 L236.2,99.0 L237.1,99.5 L238.1,100.1 L239.0,100.6 L240.0,101.2 L240.9,101.7 L241.9,102.3 L242.8,102.8 L243.8,103.4 L244.7,103.9 L245.7,104.5 L246.6,105.0 L247.6,105.6 L248.5,106.2 L249.5,106.7 L250.4,107.3 L251.4,107.8 L252.3,108.4 L253.3,108.9 L254.2,109.5 L255.2,110.0 L256.1,110.6 L257.1,111.1 L258.0,111.7 L259.0,112.3 L259.9,112.8 L260.9,113.4 L261.8,113.9 L262.8,114.5 L263.7,115.0 L264.7,115.6 L265.6,116.1 L266.6,116.7 L267.5,117.2 L268.5,117.8 L269.4,118.3 L270.4,118.9 L271.3,119.5 L272.3,120.0 L275.0,118.5 L274.0,117.9 L273.1,117.4 L272.1,116.8 L271.2,116.3 L270.2,115.7 L269.3,115.2 L268.4,114.6 L267.4,114.1 L266.5,113.5 L265.5,113.0 L264.5,112.4 L263.6,111.8 L262.6,111.3 L261.7,110.7 L260.8,110.2 L259.8,109.6 L258.9,109.1 L257.9,108.5 L257.0,108.0 L256.0,107.4 L255.0,106.9 L254.1,106.3 L253.1,105.8 L252.2,105.2 L251.2,104.6 L250.3,104.1 L249.4,103.5 L248.4,103.0 L247.5,102.4 L246.5,101.9 L245.5,101.3 L244.6,100.8 L243.6,100.2 L242.7,99.7 L241.8,99.1 L240.8,98.6 L239.9,98.0 L238.9,97.4 L238.0,96.9 L237.0,96.3 L236.0,95.8 L235.1,95.2 L234.1,94.7 L233.2,94.1 L232.2,93.6 L231.3,93.0 L230.4,92.5 L229.4,91.9 L228.5,91.3 L227.5,90.8 L226.5,90.2 L225.6,89.7 L224.6,89.1 L223.7,88.6 L222.8,88.0 L221.8,87.5 L220.9,86.9 L219.9,86.4 L219.0,85.8 L218.0,85.2 L217.0,84.7 L216.1,84.1 L215.1,83.6 L214.2,83.0 L213.2,82.5 L212.3,81.9 L211.4,81.4 L210.4,80.8 L209.5,80.3 L208.5,79.7 L207.5,79.2 L206.6,78.6 L205.6,78.0 L204.7,77.5 L203.8,76.9 L202.8,76.4 L201.9,75.8 L200.9,75.3 L200.0,74.7 L199.0,74.2 L198.0,73.6 L197.1,73.1 L196.1,72.5 L195.2,71.9 L194.2,71.4 L193.3,70.8 L192.4,70.3 L191.4,69.7 L190.5,69.2 L189.5,68.6 L188.5,68.1 L187.6,67.5 L186.6,67.0 L185.7,66.4 L184.8,65.9 L183.8,65.3 L182.9,64.7 L181.9,64.2 L181.0,63.6 L180.0,63.1 L179.0,62.5 L178.1,62.0 L177.1,61.4 L176.2,60.9 L175.2,60.3 L174.3,59.8 L173.4,59.2 L172.4,58.7 L171.5,58.1 L170.5,57.5 L169.5,57.0 L168.6,56.4 L167.6,55.9 L166.7,55.3 L165.8,54.8 L164.8,54.2 L163.9,53.7 L162.9,53.1 L162.0,52.6 L161.0,52.0" fill="none" stroke="#000" stroke-width="0.85"/>
<polyline points="104.9,141.0 106.7,136.6 108.5,132.3 110.3,128.2 112.1,124.3 113.8,120.5 116.6,116.8 118.4,113.3 120.1,110.0 122.9,106.8 124.6,103.9 127.4,101.1 129.2,98.6 131.9,96.3 134.6,94.2 137.4,92.4 140.1,90.9 142.8,89.4 145.6,87.9 148.3,86.3 151.0,84.8 153.7,83.3 156.5,81.8 159.2,80.3 161.9,78.8 164.7,77.3 167.4,75.8 170.1,74.8 172.9,74.1 176.6,73.9 179.3,74.0 183.0,74.4 186.6,75.1 190.3,76.1 194.0,77.4 197.7,78.8 201.4,80.6 205.1,82.5" fill="none" stroke="#000" stroke-width="1.3"/>
<g fill="none" stroke="#000" stroke-width="1"><polyline points="172.3,81.0 172.3,44.0 173.5,40.0 176.0,37.5 179.0,36.5 182.0,35.5 185.0,37.0 188.0,39.0 192.0,39.5 195.0,41.0 198.0,44.0 201.0,44.5 204.0,48.0 206.5,53.0 208.3,59.0 208.8,66.0 208.8,88.0"/><polyline points="174.5,82.2 174.5,45.2 175.7,41.2 178.2,38.7 181.2,37.7 184.2,36.7 187.2,38.2 190.2,40.2 194.2,40.7 197.2,42.2 200.2,45.2 203.2,45.7 206.2,49.2 208.7,54.2 210.5,60.2 211.0,67.2 211.0,89.2"/><polyline points="177.5,66.0 177.5,48.0 179.0,45.0 182.0,44.5 185.0,46.0 189.0,49.0 192.0,49.0 196.0,53.0 199.0,57.0 201.5,60.0 203.0,65.0 203.6,70.0 203.6,83.0"/><polyline points="179.7,67.2 179.7,49.2 181.2,46.2 184.2,45.7 187.2,47.2 191.2,50.2 194.2,50.2 198.2,54.2 201.2,58.2 203.7,61.2 205.2,66.2 205.8,71.2 205.8,84.2"/><polyline points="211.0,90.5 211.0,63.0 212.0,60.0 215.0,58.5 218.0,58.5 221.0,58.0 224.0,60.0 228.0,62.0 232.0,62.5 235.0,65.0 238.0,66.0 241.0,69.0 243.5,74.0 245.0,80.0 245.0,107.0"/><polyline points="213.2,91.7 213.2,64.2 214.2,61.2 217.2,59.7 220.2,59.7 223.2,59.2 226.2,61.2 230.2,63.2 234.2,63.7 237.2,66.2 240.2,67.2 243.2,70.2 245.7,75.2 247.2,81.2 247.2,108.2"/><polyline points="215.6,88.0 215.6,68.0 217.0,64.5 220.0,63.0 224.0,64.5 227.0,67.0 231.0,67.5 234.0,71.0 237.0,74.0 239.5,78.0 240.4,83.0 240.4,101.0"/><polyline points="217.8,89.2 217.8,69.2 219.2,65.7 222.2,64.2 226.2,65.7 229.2,68.2 233.2,68.7 236.2,72.2 239.2,75.2 241.7,79.2 242.6,84.2 242.6,102.2"/><polyline points="277.5,70.0 277.5,116.0"/><polyline points="109.0,79.0 116.0,83.0 122.0,90.0 129.0,98.0 135.0,105.0 142.0,112.0 147.0,119.0"/><polyline points="112.0,78.0 118.0,81.0 125.0,89.0 131.0,96.0 138.0,103.0 145.0,111.0"/><polyline points="121.0,114.0 127.0,107.0 133.0,101.0 140.0,97.0 147.0,94.0 153.0,93.0"/><polyline points="124.0,118.0 130.0,111.0 137.0,104.0 144.0,100.0 150.0,98.0"/><polyline points="128.0,95.0 135.0,93.0 142.0,96.0 148.0,101.0 151.0,108.0 147.0,114.0 139.0,116.0 131.0,112.0 127.0,104.0 128.0,95.0"/><polyline points="181.0,125.0 189.0,127.0 197.0,130.0 206.0,132.0 214.0,135.0 221.0,140.0"/><polyline points="183.0,128.0 191.0,130.0 199.0,133.0 208.0,135.0 216.0,138.0 222.0,143.0"/></g>
<line x1="46.5" y1="62.0" x2="46.5" y2="112.0" stroke="#9ce49c" stroke-width="1"/>
<g stroke="#ff1010" fill="#ff1010" stroke-width="1.1"><line x1="54" y1="53" x2="49" y2="59" stroke-dasharray="1.6,1.2"/><path d="M46.5,63.5 L47.799999999999955,56 L52,59.2Z" stroke="none"/></g>
<g stroke="#2838ff" fill="#2838ff" stroke-width="0.9">
<line x1="161.5" y1="78.5" x2="161.5" y2="46" stroke-dasharray="1.5,1"/>
<path d="M159.0,47 L161.5,40 L164.0,47Z" stroke="none"/>
<line x1="161.5" y1="78.5" x2="132" y2="62" stroke-dasharray="1.5,1"/>
<path d="M127.5,59.5 L134.5,60.5 L131.5,64.5Z" stroke="none"/>
<line x1="161.5" y1="78.5" x2="190" y2="62"/>
<path d="M194,59.5 L187,60 L190,64.5Z" stroke="none"/>
</g>
<g font-family="Liberation Sans,sans-serif" font-size="9.5" fill="#3040ff"><text x="153" y="35.5">Z+</text><text x="114" y="58.5">Y+</text><text x="195" y="58.5">X+</text></g>

</svg>
</body></html>
